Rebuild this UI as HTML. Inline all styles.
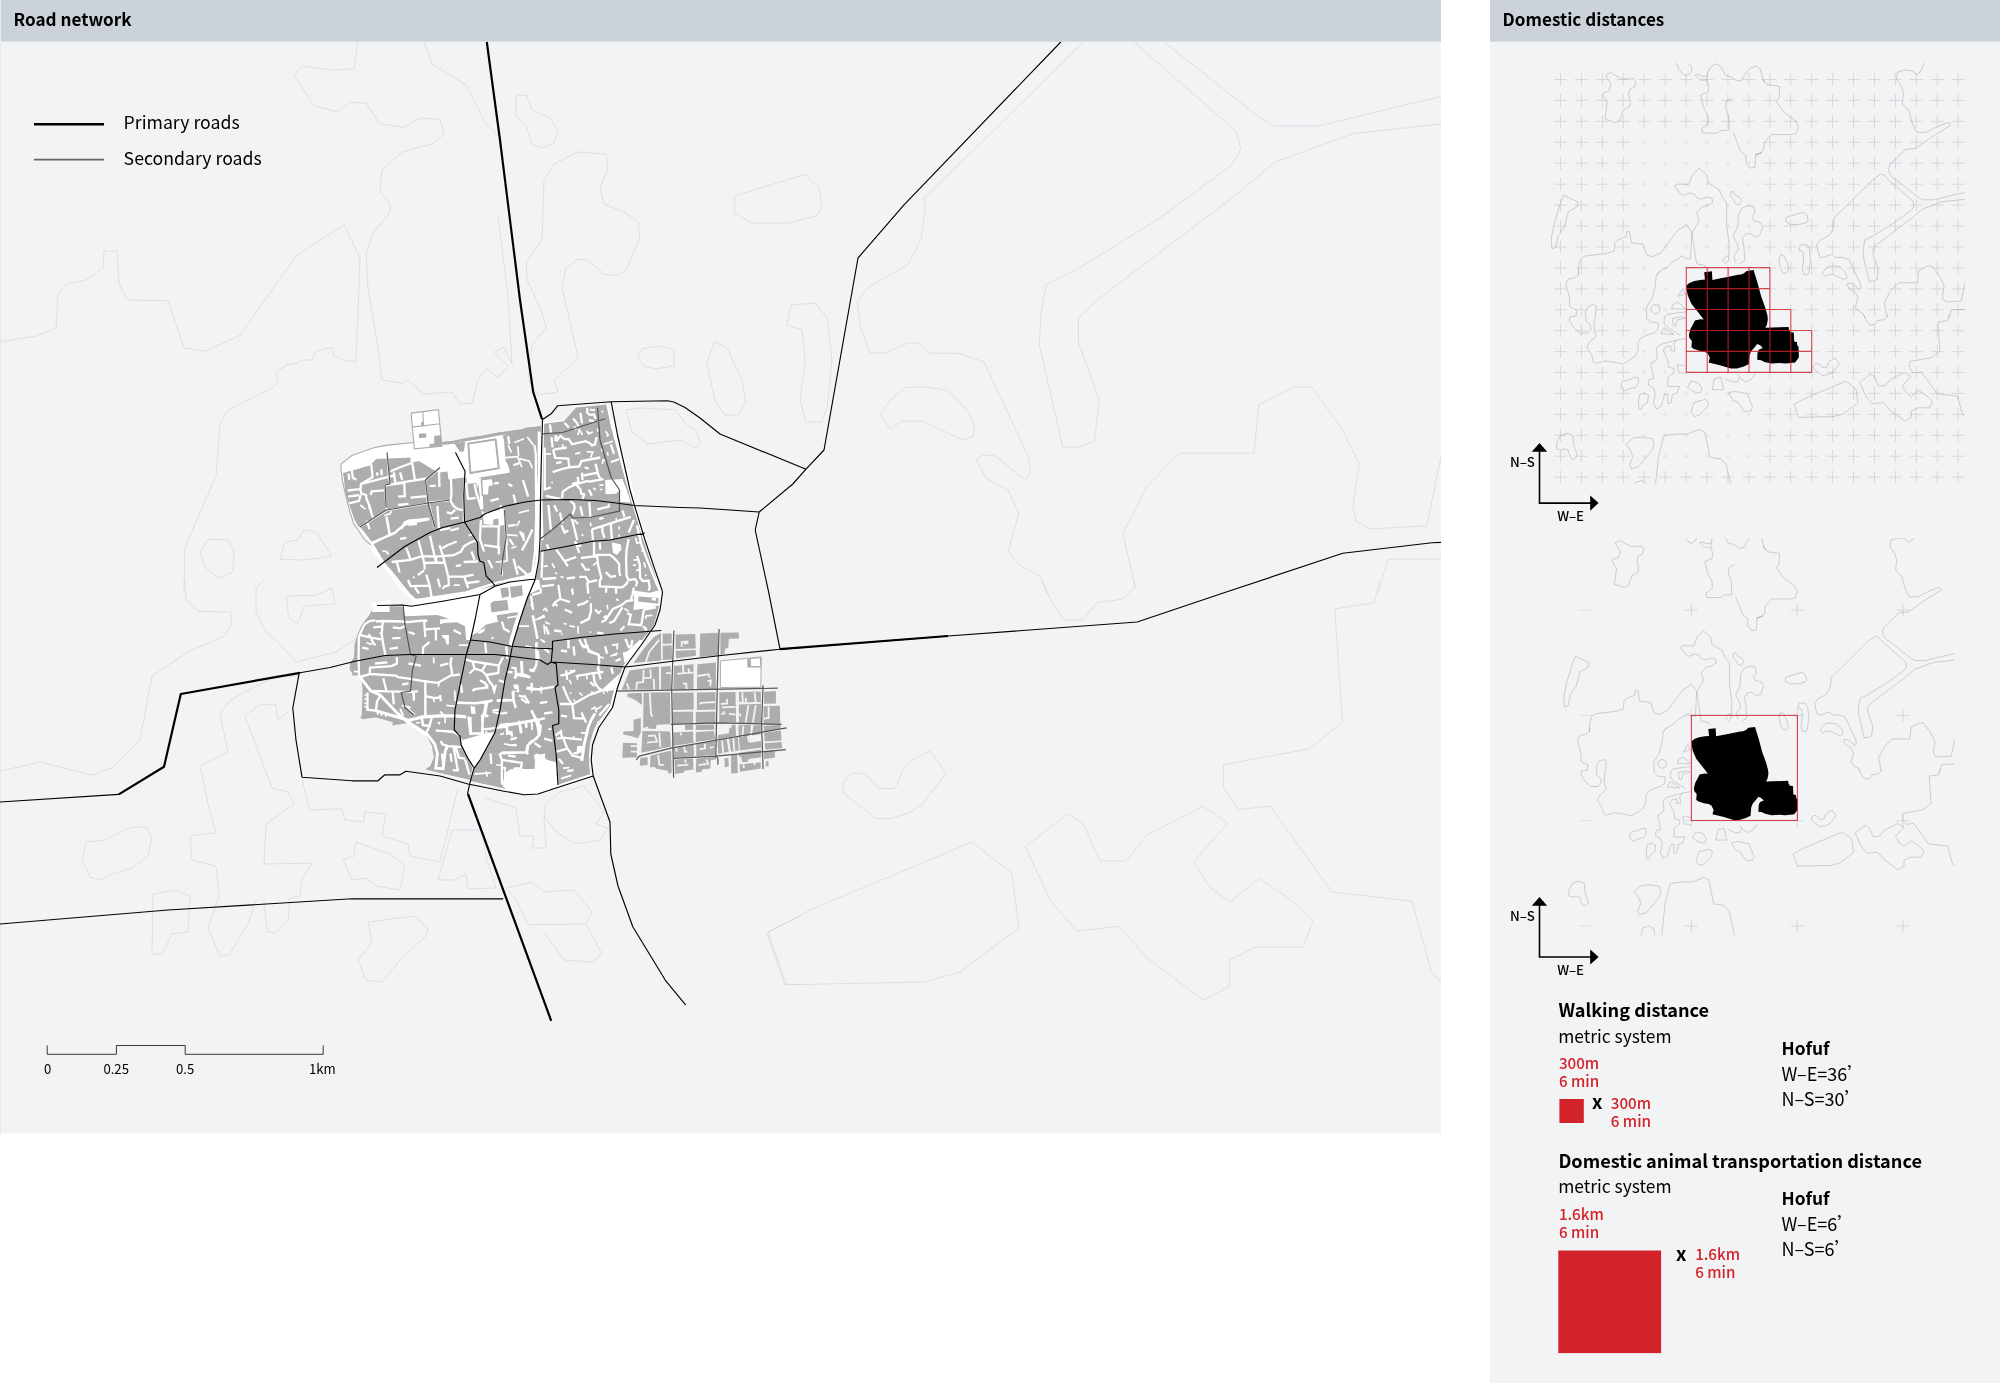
<!DOCTYPE html>
<html lang="en"><head><meta charset="utf-8"><title>Road network – Domestic distances</title>
<style>html,body{margin:0;padding:0;background:#fff}body{width:2000px;height:1383px;overflow:hidden;font-family:'Noto Sans CJK SC','Liberation Sans',sans-serif}
svg{position:absolute;left:0;top:0;display:block;will-change:transform}text{font-family:'Noto Sans CJK SC','Liberation Sans',sans-serif;fill:#000}
.pr{fill:none;stroke:#000;stroke-width:1.15;stroke-linejoin:round}.prt{fill:none;stroke:#000;stroke-width:2.2;stroke-linejoin:round}
.sr{fill:none;stroke:#555;stroke-width:1.2;stroke-linejoin:round}
.ct{fill:none;stroke:#cfd1d3;stroke-width:.6}
.ic{fill:none;stroke:#a9aaac;stroke-width:.55}
.g{fill:#adadad}.wh{fill:#fff}.bg{fill:#f2f3f5}
.s1{fill:none;stroke:#fff;stroke-width:1.7}.s15{fill:none;stroke:#fff;stroke-width:2.3}.s2{fill:none;stroke:#fff;stroke-width:2.9}.s25{fill:none;stroke:#fff;stroke-width:3.2}.s3{fill:none;stroke:#fff;stroke-width:3.6}
.wl{fill:none;stroke:#adadad;stroke-width:1.1}
.b1{fill:none;stroke:#f2f3f5;stroke-width:1}.b15{fill:none;stroke:#f2f3f5;stroke-width:1.8}.b2{fill:none;stroke:#f2f3f5;stroke-width:1.8}
.rl{fill:none;stroke:#d2232a;stroke-width:1.1}.rf{fill:#d2232a}
.pl{fill:none;stroke:#d4d5d7;stroke-width:.9}.pl2{fill:none;stroke:#e0e1e3;stroke-width:.9}
.hb{font-weight:700;font-size:17.1px}.lg{font-size:17.7px}.sc{font-size:13.2px}
.h1{font-weight:700;font-size:18.15px}.lt{font-weight:400;font-size:17.4px}.rd{font-weight:500;font-size:15.2px;fill:#d2232a}
.hf{font-weight:700;font-size:17.4px}.rg{font-size:18px}.ax{font-weight:500;font-size:13.3px}.x{font-weight:700;font-size:18.5px}
</style></head><body>
<svg width="2000" height="1383" viewBox="0 0 2000 1383">
<rect x="0" y="0" width="1441" height="1133.5" class="bg"/>
<rect x="1490" y="0" width="510" height="1383" class="bg"/>
<rect x="0" y="0" width="1441" height="41.6" fill="#cbd2d9"/>
<rect x="1490" y="0" width="510" height="41.6" fill="#cbd2d9"/>
<rect x="0" y="0" width="1" height="1133.5" fill="#e6e8ea"/>
<text x="13.6" y="25.6" class="hb">Road network</text>
<text x="1502.6" y="25.6" class="hb">Domestic distances</text>
<defs><clipPath id="cm"><rect x="0" y="41.5" width="1441" height="1092"/></clipPath>
<clipPath id="c1"><rect x="1551" y="63" width="421" height="420.5"/></clipPath>
<clipPath id="c2"><rect x="1562.7" y="538.2" width="397.3" height="397"/></clipPath>
<g id="mc24"><path d="M1083.2 42 1002.4 122 924 198 925.2 208 921.2 238.8 908 264.8 868 287.2 857.2 302.8 860.8 328 870 352.8 884.8 352.8 908.8 342.8 919.2 343.2 930 353.2 958 353.2 984 362 1028 456 1030.4 472 1027.2 478.4 1021.2 477.6 996 456 983.2 455.2 976 459.2 986.4 478.8 1008 490 1018.8 513.2 1008.4 550.8 1019.2 564.8 1040 576 1047.2 592.8M1134 42 1236 131.2 1240.8 148.8 1232 164.8 1160 218 1074 271.2 1046.4 284 1041.2 312 1039.2 344 1062.8 447.2 1079.2 447.2 1094.4 440.8 1099.2 400 1078.4 342 1078.4 318 1098 299.2 1232 198 1274.4 162.4 1352.8 133.6 1441.2 124M1164 42 1256 114.8 1274.4 126 1318 126 1441.2 96.4M1135.2 588 1122.8 532.8 1146.8 486.8 1179.2 453.2 1254 453.2 1258.8 404.8 1294 387.2 1312 387.2 1342.4 430 1359.2 464 1352.8 506 1356 521.2 1370.4 528.8 1426.8 526 1441.2 456M734.8 196 804.8 174.4 819.2 188 822 208 816 216 788 223.2 752 223.2 734.8 213.2 734.8 196M791.2 304.8 815.2 303.2 827.2 318 832 360 827.2 408 821.2 422 806 422 800 400 805.2 362 802 330 786.8 325.2 791.2 304.8M714 342 726.8 347.2 742 380 746 402 738 415.2 724.8 415.2 715.2 401.2 706.8 364 714 342M880 415.2 890 400 906 387.2 928 387.2 948 390.4 968.8 412 974.8 427.2 972.8 436 963.2 440 922 421.2 902 421.2 890.4 429.2 880 415.2M1388 559.2 1441.2 559.2M1378 592.8 1388 559.2M766.8 933.2 810 910 972 842 1012 873.2 1018.8 928 960 972 924 982 784.8 984.8 766.8 933.2M1025.2 846.8 1068 813.6 1084 824.8 1100 860.8 1126 860.8 1147.2 834.8 1203.2 806.4 1228 823.2 1194 861.2 1208.8 886.4 1230 902.4 1258.8 878.4 1291.2 900 1312.8 921.2 1303.2 947.2 1255.2 947.2 1229.6 960 1229.6 986.4 1203.2 1000 1147.2 958 1119.2 926.4 1076.8 931.2 1050.8 901.2 1025.2 846.8M843.2 783.2 851.2 773.2 862 773.2 870 778 878 788 894 788.8 898.8 781.2 902 771.2 910 760.8 930.4 751.2 946 773.2 922 804.8 908 813.2 891.2 818.4 876 818.4 843.2 792.8 843.2 783.2M1380 580 1374 602.8 1334.8 608.8 1342.4 722 1309.2 748.8 1223.6 764.8 1223.6 788 1238.8 809.6 1270 806 1332 892 1412 901.2 1432 974 1441.2 981.2M1041.2 580 1052 602 1064 620 1082.8 620 1096.8 602.8 1122 599.2 1135.2 587.2 1134 580"/></g>
<g id="ins"><path class="ic" d="M1605.6 75.5 1610.3 72.7 1622 79 1633.6 78.7 1636 81.8 1634.4 87.2 1630.2 88.8 1628.6 94.2 1630.5 100.7 1629.7 106.6 1623.5 109.8 1619.6 120.6 1615.7 122.5 1604.9 119.1 1607.2 102 1602.5 95 1603.3 92.6 1608.7 91.1 1611.1 84.1 1605.6 75.5M1676.4 62.8 1678.7 69.3 1682.6 74 1686.5 75.9 1691.1 72.4 1691.9 67 1687.3 63.1M1695 75.1 1700.5 80.2 1706.7 80.2 1708.2 70.9 1712.1 65.4 1716.8 63.9 1720.7 66.2 1725.3 75.5 1731.6 77.1 1737 81 1741.7 80.2 1745.6 73.2 1750.2 67.8 1756.4 66.2 1760.3 69.3 1762.7 78.7 1765 82.5 1762 78.7 1767.4 84.9 1775.2 85.7 1779.6 86.7 1779.1 97.3 1776.5 101.7 1784.5 112.9 1795.4 120.6 1798.5 126.9 1796.2 133.4 1792.3 134.6 1771.3 134.6 1764.3 142.4 1763.6 150.2 1759.7 153.3 1755 154.8 1761.9 152.5 1755.7 155.6 1754.9 167.3 1750.2 168.1 1746.3 163.4 1745.6 154.8 1740.9 151.7 1733.1 132.3M1695 75.1 1698.1 74.3 1702.8 76.3 1706.7 75.5M1706.7 80.2 1709 86.4 1708.2 91.9 1700.5 95 1702 101.2 1703.6 107.4 1708.2 116 1708.2 123.7 1701.7 128.4 1702.8 133.1 1717.6 133.1 1720.7 130.7 1729.2 130 1728.5 116 1725.3 106.6 1726.1 101.2 1732.3 98.1M1674.5 185.9 1677.2 184.1 1688.8 184.4 1691.9 175.8 1698.9 168.1 1706.7 175 1708.2 182.8 1719.1 189.4 1722.2 196.8 1726.6 203 1726.6 224.8 1729.2 243.5 1728.5 260.6 1725.3 263.7 1722.2 260.6 1726.9 255.6 1728.5 257.5M1674.5 185.9 1680.3 193.7 1683.4 195.3 1689.6 192.9 1694.3 194 1696.6 197.6 1700.5 199.1 1707.5 197.1 1712.1 198.4 1712.6 202.3 1708.2 205.4 1702 206.9 1696.6 213.1 1698.9 218.6 1698.1 223.2 1691.9 232.6 1686.5 224.8 1677.2 231 1660.8 252.8 1652.3 256.7 1646.8 255.1 1642.9 244.2 1631.3 242.7 1629.7 231.8 1626.6 231.8 1626.6 236.5 1618.1 239.6 1615 242.7 1614.2 251.2 1605.6 253.6 1585.4 255.9 1580.8 259 1578.9 265.2 1578.4 275M1691.9 232.6 1690.4 259 1685.7 258.2 1683.4 255.9 1680.3 256.7 1678.7 259 1674 260.6 1667.8 266.8 1660.8 270.7 1656.2 275M1691.9 232.6 1696.6 263.7 1703.6 265.2 1706.7 267.6M1563.7 195.3 1578.4 202.3 1576.9 206.9 1568.3 211.6 1564.4 227.1 1558.2 235.7 1555.9 247.3 1552 248.9 1551.2 238.8 1554.3 223.2 1560.5 203 1563.7 195.3M1730.8 192.2 1733.1 191.4 1735.5 195.3 1740.1 197.6 1741.7 200.7 1738.6 205.4 1734.7 203 1733.9 199.9 1730.8 196.8 1730.8 192.2M1735.5 262.1 1733.9 255.9 1738.6 248.9 1737 243.5 1733.1 235.7 1737.8 227.1 1738.6 213.9 1742.5 207.7 1748.7 205.4 1754.1 206.9 1754.9 213.1 1751.8 217 1754.1 220.9 1760.3 222.5 1762.7 227.1 1759.6 235.7 1754.9 237.2 1750.2 233.4 1745.6 234.1 1742.5 238.8 1744 248.1 1744.8 260.6 1740.1 263.7M1924.5 63.1 1919.8 72.4 1916.7 74.8 1912 70.9 1904.3 70.1 1897.3 72.4 1896.5 79.4 1901.1 85.7 1903.5 92.6 1902.4 104.3 1908.9 110.5 1912 122.2 1916.7 132.3 1926 132.3 1938.5 126.1 1948.6 122.2 1950.6 125.3 1935.3 134.6 1915.9 148.3 1905.8 149.4 1890.3 164.2 1888.4 168.8 1890.3 175 1894.9 179.7M1874.1 178.5 1880.6 174.3 1884 175 1887.2 178.5M1578.4 270 1578.4 274.7 1574.5 277.8 1568.3 279.3 1566 283.2 1566.8 288.7 1569.6 297.2 1569.6 306.5 1576.9 310.4 1576.1 315.9 1569.9 316.6 1569.6 321.3 1574.5 328.3 1580 333 1587.8 333 1590.9 329.1 1590.1 324.4 1586.2 321.3 1585.4 312 1588.5 306.5 1593.2 304.5 1596.3 306.1 1595.5 315.1 1594 324.4 1594.8 332.2 1596.3 336.1 1589.3 342.3 1587 347.7 1590.1 352.4 1592.4 357.1 1593.2 361.7 1596.3 363.3 1604.9 361 1611.9 361.7 1622.7 364.1 1629.7 360.2 1635.2 356.3 1638.3 349.3 1638 343.1 1640.6 338.4 1646.1 335.3 1653.8 333 1657.7 329.9 1658.5 322.9 1650.7 322.1 1646.8 318.2 1646.4 307.3 1652.3 298 1655.4 285.5 1656.2 276.2 1660 270.8M1650.7 308.1 1653.8 304.5 1658.5 305 1660 308.9 1658.5 312.8 1654.6 313.8 1651.5 311.2 1650.7 308.1M1685.7 312 1677.2 312.8 1667.8 314.3 1664.7 316.6 1663.9 322.9 1667.8 327.5 1674 331.4 1680.3 335.3M1672.5 318.2 1681.8 316.6 1684.9 318.2 1677.2 319.8 1675.6 326 1673.3 325.2 1672.5 318.2M1660.8 333.7 1663.9 327.5 1674 334.5 1660.8 333.7M1671.7 308.9 1672.5 305 1677.2 302.2 1681.8 305 1684.9 308.9 1671.7 308.9M1677.9 296.4 1682.6 288.7 1684.9 294.1 1677.9 296.4M1685.7 338.4 1674 340.7 1660 344.6 1656.2 347.7 1657.3 357.1 1655.4 361 1650.7 363.3 1652.3 371.1 1653.8 378.8 1648.9 379.6 1648.4 385 1653.8 388.2 1655.4 394.4 1653.4 402.2 1656.2 409.1 1660.8 406.8 1664.7 394.4 1667.8 394.4 1667.8 403.7 1670.9 402.9 1672.5 394.4 1677.2 392.8 1679.5 386.6 1667.8 386.3 1667.8 377.3 1674 372.6 1674 368.7 1668.6 367.2 1667.8 360.2 1663.2 350.8 1665.5 347 1670.9 346.2 1670.9 350.8 1674.8 350.8 1674 343.1 1677.2 340M1621.2 383.5 1622.7 381.2 1629.7 379.6 1635.2 377 1638.3 378.1 1638.3 383.5 1635.2 387.4 1629 388.9 1624.3 391 1621.5 388.2 1621.2 383.5M1639.1 409.1 1638.3 400.6 1639.8 394.4 1644.5 393.1 1648.4 395.2 1647.6 402.2 1642.9 405.3 1641.4 409.1 1639.1 409.1M1687.3 387.4 1691.1 381.2 1698.1 382.7 1702 388.2 1700.5 392.8 1694.3 392 1687.3 387.4M1691.1 411.5 1694.3 402.2 1705.1 399.4 1708.6 402.2 1707.5 406.8 1698.9 415.4 1694.3 416.5 1691.1 411.5M1728.5 392.8 1734.7 391.3 1747.1 393.6 1752.6 406.8 1751 411.2 1744 411.2 1737.8 402.2 1733.1 400.6 1728.5 392.8M1712.1 389.7 1714.5 378.8 1720.7 377.3 1723.8 389.7 1712.1 389.7M1556.7 448.8 1556.7 442.6 1560.5 435.6 1566.8 433.2 1573 435.6 1573.8 445.7 1577.6 455.8 1573 459.7 1569.9 456.6 1568.3 450.3 1564.4 448.8 1560.5 450.3 1556.7 448.8M1625.8 444.1 1633.6 437.9 1641.4 437.1 1652.3 438.7 1653.8 443.4 1652.3 450.3 1638.3 466.7 1631.3 468.7 1629.7 464.3 1632.8 456.6 1629.7 448.8 1625.8 444.1M1654.6 493.9 1655.4 485 1658.5 456.6 1663.9 435.6 1677.2 434 1688 434 1698.9 429.4 1704.4 431.7 1706.7 441 1709.8 457.3 1720.7 458.9 1726.1 464.3 1730.8 485 1732.3 493.9M1632.1 493.9 1635.2 482.2 1642.2 480.7 1646.8 483.8 1647.6 493.9M1685.7 365.6 1677.2 364.8 1678.7 372.6 1685.7 373.4M1737.8 374.2 1740.9 378.8 1745.6 381.9 1751.8 378.8 1755.7 372.6M1725.3 378.8 1733.1 381.9 1737.8 381.9 1739.3 377.3M1874.2 178.5 1853.7 198.8 1833.8 218.1 1834.2 220.6 1833.1 228.4 1829.8 235 1819.7 240.6 1816.9 244.6 1817.8 251 1820.2 257.3 1823.9 257.3 1830 254.7 1832.6 254.8 1835.4 257.4 1842.5 257.4 1849 259.6 1860.2 283.4 1860.8 287.5 1860 289.1 1858.5 288.9 1852.1 283.4 1848.8 283.2 1847 284.2 1849.7 289.2 1855.1 292 1857.9 297.9 1855.2 307.4 1858 311 1863.2 313.8 1865.1 318.1M1887 178.5 1912.9 201.1 1914.1 205.6 1911.9 209.6 1893.6 223.1 1871.8 236.6 1864.9 239.8 1863.5 246.9 1863 255 1869 281.2 1873.2 281.2 1877 279.6 1878.2 269.2 1873 254.5 1873 248.4 1877.9 243.7 1911.9 218.1 1922.6 209 1942.5 201.7 1964.9 199.3M1894.6 178.5 1917.9 197 1922.6 199.8 1933.6 199.8 1964.9 192.3M1887.3 316.8 1884.2 302.9 1890.3 291.2 1898.5 282.7 1917.4 282.7 1918.7 270.4 1927.6 266 1932.1 266 1939.8 276.8 1944.1 285.4 1942.5 296.1 1943.3 299.9 1946.9 301.8 1961.2 301.1 1964.9 283.4M1785.9 217.5 1803.7 212.1 1807.3 215.5 1808 220.6 1806.5 222.6 1799.4 224.4 1790.3 224.4 1785.9 221.9 1785.9 217.5M1800.2 245.1 1806.3 244.7 1809.3 248.4 1810.5 259.1 1809.3 271.2 1807.8 274.8 1804 274.8 1802.4 269.2 1803.8 259.6 1802.9 251.5 1799.1 250.3 1800.2 245.1M1780.7 254.5 1783.9 255.8 1787.7 264.2 1788.8 269.7 1786.7 273.1 1783.4 273.1 1781 269.5 1778.8 260.1 1780.7 254.5M1822.7 273.1 1825.2 269.2 1829.3 266 1834.9 266 1839.9 266.8 1845.2 272.3 1846.7 276.1 1846.2 278.3 1843.8 279.4 1833.3 274.6 1828.3 274.6 1825.3 276.6 1822.7 273.1M1951.4 309.5 1964.9 309.5M1948.8 318.1 1951.4 309.5M1794 404.3 1805 398.4 1846 381.2 1856.1 389.1 1857.9 403 1843 414.1 1833.8 416.6 1798.6 417.3 1794 404.3M1859.5 382.4 1870.3 374 1874.4 376.8 1878.4 385.9 1885 385.9 1890.4 379.4 1904.6 372.2 1910.9 376.4 1902.2 386 1906 392.4 1911.4 396.5 1918.7 390.4 1926.9 395.9 1932.3 401.2 1929.9 407.8 1917.7 407.8 1911.3 411.1 1911.3 417.8 1904.6 421.2 1890.4 410.6 1883.3 402.6 1872.6 403.8 1866 396.2 1859.5 382.4M1813.4 366.3 1815.4 363.8 1818.1 363.8 1820.2 365 1822.2 367.5 1826.3 367.7 1827.5 365.8 1828.3 363.2 1830.3 360.6 1835.5 358.2 1839.4 363.8 1833.3 371.8 1829.8 373.9 1825.5 375.2 1821.7 375.2 1813.4 368.7 1813.4 366.3M1949.4 314.8 1947.8 320.6 1937.9 322.1 1939.8 350.8 1931.4 357.6 1909.7 361.6 1909.7 367.5 1913.6 373 1921.5 372.1 1937.2 393.8 1957.5 396.2 1962.5 414.6 1964.9 416.4M1863.5 314.8 1866.3 320.4 1869.3 324.9 1874.1 324.9 1877.6 320.6 1884 319.7 1887.3 316.6 1887 314.8"/><path d="M1704.2 272.3 1711.9 271.3 1712.4 279.9 1720.7 278.3 1728.8 276.8 1738 274.8 1741 274.6 1744 273.3 1746.6 271 1753.6 270 1757.7 283.4 1761.2 296.6 1765.3 307.7 1767.5 315.8 1767.8 319.9 1766.8 324.9 1765.3 327.7 1788.6 327.1 1789.1 330 1790.6 332.2 1793.8 332.5 1794.2 341.6 1796.9 342.1 1797.3 345.7 1798.5 346.2 1798.9 357.3 1797.2 359.8 1795.1 362.4 1790.6 362.9 1785.5 363.6 1779.5 362.9 1771.4 363.6 1764.3 361.9 1761.2 360.3 1757.2 359.8 1757.5 352.8 1758.7 349.7 1762.8 348 1760.2 345.2 1757.2 343.9 1754.7 347.2 1751.1 351.2 1749.6 355.3 1748.9 363.9 1744 366.4 1736.9 368.4 1730.9 368.4 1720.7 365.4 1708.6 362.4 1709.8 357.8 1707.6 353.3 1704.5 351.7 1699.5 350.7 1693.4 348.7 1691.4 347.2 1691.9 341.1 1689.4 338.1 1688.9 335 1690.4 329 1692.4 325.4 1694.9 320.4 1700.5 319.3 1703.7 319.6 1698.5 312.8 1691.4 303.7 1687.8 295.6 1686.5 289 1686.3 285.4 1689.4 282.9 1694.4 280.9 1700.5 279.9 1705 279.6Z" fill="#000"/></g>
</defs>
<g clip-path="url(#cm)">
<path class="ct" d="M1083.2 42 1002.4 122 924 198 925.2 208 921.2 238.8 908 264.8 868 287.2 857.2 302.8 860.8 328 870 352.8 884.8 352.8 908.8 342.8 919.2 343.2 930 353.2 958 353.2 984 362 1028 456 1030.4 472 1027.2 478.4 1021.2 477.6 996 456 983.2 455.2 976 459.2 986.4 478.8 1008 490 1018.8 513.2 1008.4 550.8 1019.2 564.8 1040 576 1047.2 592.8M1134 42 1236 131.2 1240.8 148.8 1232 164.8 1160 218 1074 271.2 1046.4 284 1041.2 312 1039.2 344 1062.8 447.2 1079.2 447.2 1094.4 440.8 1099.2 400 1078.4 342 1078.4 318 1098 299.2 1232 198 1274.4 162.4 1352.8 133.6 1441.2 124M1164 42 1256 114.8 1274.4 126 1318 126 1441.2 96.4M1135.2 588 1122.8 532.8 1146.8 486.8 1179.2 453.2 1254 453.2 1258.8 404.8 1294 387.2 1312 387.2 1342.4 430 1359.2 464 1352.8 506 1356 521.2 1370.4 528.8 1426.8 526 1441.2 456M734.8 196 804.8 174.4 819.2 188 822 208 816 216 788 223.2 752 223.2 734.8 213.2 734.8 196M791.2 304.8 815.2 303.2 827.2 318 832 360 827.2 408 821.2 422 806 422 800 400 805.2 362 802 330 786.8 325.2 791.2 304.8M714 342 726.8 347.2 742 380 746 402 738 415.2 724.8 415.2 715.2 401.2 706.8 364 714 342M880 415.2 890 400 906 387.2 928 387.2 948 390.4 968.8 412 974.8 427.2 972.8 436 963.2 440 922 421.2 902 421.2 890.4 429.2 880 415.2M1388 559.2 1441.2 559.2M1378 592.8 1388 559.2M766.8 933.2 810 910 972 842 1012 873.2 1018.8 928 960 972 924 982 784.8 984.8 766.8 933.2M1025.2 846.8 1068 813.6 1084 824.8 1100 860.8 1126 860.8 1147.2 834.8 1203.2 806.4 1228 823.2 1194 861.2 1208.8 886.4 1230 902.4 1258.8 878.4 1291.2 900 1312.8 921.2 1303.2 947.2 1255.2 947.2 1229.6 960 1229.6 986.4 1203.2 1000 1147.2 958 1119.2 926.4 1076.8 931.2 1050.8 901.2 1025.2 846.8M843.2 783.2 851.2 773.2 862 773.2 870 778 878 788 894 788.8 898.8 781.2 902 771.2 910 760.8 930.4 751.2 946 773.2 922 804.8 908 813.2 891.2 818.4 876 818.4 843.2 792.8 843.2 783.2M1380 580 1374 602.8 1334.8 608.8 1342.4 722 1309.2 748.8 1223.6 764.8 1223.6 788 1238.8 809.6 1270 806 1332 892 1412 901.2 1432 974 1441.2 981.2M1041.2 580 1052 602 1064 620 1082.8 620 1096.8 602.8 1122 599.2 1135.2 587.2 1134 580M0 342 36 336 56 328 58 294 66 284 86 280 103.2 268 104 251.2 116.8 251.2 119.2 284 127.2 300 168 300.8 184 348 206 351.2 240 335.2 296 256 344 224.8 360 258 356 362 344.8 360 334 356 332 347.2 316 351.2 312 360 300.8 360 298 363.2 287.2 364.8 276 372 278 382 272 388 228 410 220 424 216 476 184.8 548 184 592.8M358 42 354 68.8 334 70 302 66 294 75.2 314 106 338 112 350 102 366 103.2 380 124 404 127.2 420 118 440 119.2 444 134 432 144 402 152 382 170 380 192 390 203.2 390 212 374 232 366 252 368 288 378 348 382 380 402 383.2 408 380 424 394 452 392 460 404 472 403.2 478 380 486 368 498 378 508 366 494 352 504 347.2 512 364 508 296 498 216M424 42 432 64 466 84.8 486 124 498 136M516 96 526 95.2 532 110 550 118 558 131.2 554 143.2 542 148 532 144.8 526 126 516 116 516 96M538 395.2 558 392 554 380 576 360 578 356 562 288 566 268 578 259.2 588 260 604 274 616 276 626 270 640 238 638 222 624 212 604 204 600 188 608 168 606 154 578 152 554 164 544 180 542 240 526 262 527.2 280 542 312 546 328 532 344.8 528 380 538 395.2M638 358 642 348.8 660 346 674 350 674 366 656 368.8 644 366 638 358M200 552 208 539.2 228 540 234 550 232.8 572 218 578 206 568 200 552M280 559.2 284.8 542 298 540 304 530 316 532 332 556 320 558 304 560 280 559.2M626 410 640 408 676 410 686 424 696 430 700 442 696 448 680 440 648 444 632 432 626 410M0 771.2 40 762 92 775.2 112 768 140 740 152 676 188 652 224 636 232 624 230 610M184.8 580 186 600 198 611.2 228 612M264 580 256 588 256 612 266 632 280 644 296 662 336 652 360 636M286 596 316 595.2 332 588 335.2 604 304 606 298 624 288.8 618 286 596M82 860 86 842 104 840 132 827.2 146 827.2 152 836 148 856 132 868 112 874 100 880 90 876.8 82 860M244.8 716 260 704 276 704.8 278 720 288 712M244.8 716 272 788 288 792 294 804 266 824 264 864 312 863.2 302 878 300 896 290 898 288 920 276 932.8 267.2 932 264 900M298 676 276 676 230 700 220 714 228 752 200 766 208 804 216 832.8 190 836 192 860 216 866 219.2 896 208 928 220 956 228.8 955.2 248 924 256 900M152 954 152.8 894 176 890 190 896 188 932 172 934 162 954 152 954M302 780 310 810 342 808.8 344.8 820 364 822 364.8 812 386 814 382 836 408 844 410 856 440 862 458 788M343.2 860 354 856 356 842 390 854 404.8 866 400 890 376 886 366 878 352 880 343.2 860M358 960 372 942 368 922 414 916 428 928 426 936 400 960 382 982 366 980 358 960M438 880 444 860 452 830 482 830 486 856 496 888 468 888.8 466 874 454 880 438 880M484 798 516 808 520 836 534 836 532 848 546 848 544 816 546 804 560 792 584 786 604 812 596 824 608 828 600 840 576 844 556 832 544 816M506 888 532 882 544 892 574 890 592 912 586 924 528 924.8 516 900 506 888M544 932 564 960 592 962 602 954 586 924M768 932 799.6 916M768 932 786 984 799.6 984.8"/>
<path class="wh" d="M341.5 464 346.6 457.9 372.9 447.8 413.4 443.2 411.3 413.4 438.7 410 441.1 444.4 466 439.1 499.4 433.6 522.7 428.6 540.9 426.2 542.9 421.5 551 422.1 563.2 419.5 575.3 413.4 577.3 406.3 607.7 403.9 613.4 430.6 623.9 469.1 633 501.5 644.1 533.8 653.2 562.2 662.3 591.5 662.5 592.5 660 610 655 625 641.2 645 625 667.5 617.5 687.5 611.2 710 598.8 727.5 592.5 745 591.2 760 593.8 775 555 787.5 537.5 794.5 525 795 505 790 470 781.2 425 770 428.8 767.5 433.8 757.5 432.5 746.2 426.2 735 416.2 726.2 406.5 723.2 392.2 725.5 392.8 722.2 376 717.5 362.5 719.2 360.2 717.5 361.8 715 362 708.8 362.5 690.8 361.8 681.2 359.2 675.5 352.2 675.5 352.2 673 349.8 669.8 349.8 663.5 354 657.2 354.5 644.5 357.5 634 361.8 624.8 369.8 614.2 372.8 602.5 391.2 600 392.5 605 412.5 606.2 413.4 601.1 405.3 594.6 395.1 582.4 385 569.3 374.9 554.1 362.8 537.9 353 521.7 344.9 495.4 342.5 477.2Z"/>
<path class="g" d="M343 473 370 465.5 376.2 459 410.5 457.5 410.5 463 419 461 434.5 470.5 440 472.5 447.5 471.5 448.5 479.5 460 478 466.2 477 467 483.8 476.2 483 477.5 488 479.5 477.5 495.5 475 510 472.5 508 465 505.5 460.5 504 440 502.5 435.8 525 428 540.5 426.5 539.5 452.5 536 500 536.5 540 535 565 529.2 575.5 490 587 450 595.5 430 598 414.5 598.8 407 593 397 581 386.8 567.8 376.8 552.5 364.5 536.5 354.5 520 345.5 493.8 344 480Z"/>
<path class="g" d="M544.2 423.8 563.8 421.2 576.2 407.5 606.2 404.5 611.2 427.5 621.2 465 632.5 505 642.5 537.5 655 575 659.5 590 658.8 607.5 653.8 625 647.5 633.8 638.8 643.8 623.8 665 615 686.2 610 706.2 596.2 725 591.2 740 590 760 591.2 773.8 558.8 784.5 557 762.5 547.5 760 540 754.5 537.5 768.8 510 770 505 772.5 505 788.8 470.5 781 473.8 769.5 480 760 495 732.5 500 710 505 680 510 656.2 512.5 645 520 620 527.5 597.5 535.5 580 539.5 560 541.2 540 542 500 543 465Z"/>
<path class="g" d="M373.8 605.5 402.5 606.5 405 616.2 437.5 615 452.5 620 465 626.2 466.2 640 470 640 466.2 655 460 685 455 710 454.2 730 460 736.2 461.2 745 467.5 757.5 472.5 767.5 470 780 425 769.5 430 766.2 433.8 757.5 432 746.2 426.2 735 416.2 726.2 406.5 723.2 392.2 725.5 392.8 722.2 376 717.5 362.5 719.2 360.2 717.5 361.8 715 362 708.8 362.5 690.8 361.8 681.2 359.2 675.5 352.2 675.5 352.2 673 349.8 669.8 349.8 663.5 354 657.2 354.5 644.5 357.5 634 361.8 624.8 369.8 614.2Z"/>
<path class="g" d="M470.5 640 490 642 511.2 646.2 509.5 661.2 505 680 500 710 495 732.5 490 732.5 480 735 462.5 740 460 736.2 454.2 730 455 710 460 685 466.2 654.5Z"/>
<path class="g" d="M419 433.6 426.3 433.4 426.3 437.8 419 438Z"/>
<path class="g" d="M434.2 435.7 441 435.2 441.9 446.2 429.5 447.2 429.5 444.1 434.2 443.6Z"/>
<path class="g" d="M421.1 422 423.7 421.8 423.7 425.7 421.1 426Z"/>
<path class="g" d="M454.2 443.3 465.2 441.8 463.9 451.4 459.9 451.7Z"/>
<path class="g" d="M521.9 429.9 527.1 427.5 540.8 426.2 540.8 435.2 535 445.1 527.1 436.2Z"/>
<path class="g" d="M500.4 587.9 508.2 587.4 509.3 596.3 501.9 597.9Z"/>
<path class="g" d="M509.8 586.9 521.9 585.3 522.9 595.2 511.4 597.9Z"/>
<path class="g" d="M490.4 603.6 493.5 601.3 507.2 600 508.5 609.9 491.4 612.6Z"/>
<path class="g" d="M496.7 615.2 513.5 612.6 518.2 612.6 514 624.6 509.8 639.3 507.2 654 468.3 653.5 470.4 639.3 472.5 635.1 477.8 632 486.2 624.6 498.8 621.5 497.2 619.4Z"/>
<path class="wh" d="M470.4 444.1 494.6 440.4 497.5 467.2 489.3 468.8 488.8 463 484.1 463.5 484.6 469.8 478.8 470.9 478.3 465.1 471.5 466.1ZM481.5 479.8 492.5 478.2 493.8 486.1 489.3 486.6 488.8 495 482.5 495.5ZM483 512.9 492.5 511.3 503 508.7 505.1 524.9 498.8 526 498.3 518.6 493.5 519.2 493 524.9 483.6 523.9ZM498.8 434.6 501.9 436.2 504.6 458.8 505.1 473.5 501.9 474ZM605.1 480 622.4 479 626.6 489.5 630.8 502.6 619.8 502.1 619.2 491.1 616.1 493.7 605.6 494.2ZM611.9 542.5 619.2 543.9 620.1 550.7 617.1 554.9 612.9 552.8ZM633.4 590.6 649.7 592.7 660.2 590.1 662.1 594.8 659.7 605.3 645.5 608.4 633.4 610 634.2 600ZM530 578 534.2 579 539.4 580.1 540.5 588.5 532.1 592.7 530 593.2ZM403.8 606.8 412.7 606.6 482 594.7 470.4 633 466.2 632 465.7 624.6 461 622 444.2 623.1 440 624.6 440 619.4 453.1 618.3 445.2 615.2 429.5 612.6 421.1 612 404.8 614.7ZM373.8 603.9 389.6 603.9 389.6 612 371.7 612ZM442.1 635.1 448.9 635.1 448.9 644.6 446.3 644.6 445.2 639.3 442.1 637.2ZM476.7 633.6 479.9 630.4 485.1 628 484.1 631.5 480.4 633.6ZM509.4 785.2 510.5 770.2 521 768.6 534.6 770.7 535.2 763.9 534.1 755 536.7 753.6 540.9 754.7 545.1 761 549.3 763.1 555.1 762.6 557.2 785.2ZM602.4 689.3 619.7 673.6 616.5 684.1 613.4 690.4ZM624.4 663.1 644.9 640 639.6 640 627 651.5 622.8 652.6ZM577.2 746 582.9 746 582.9 752.3 578.2 752.9ZM462.6 743 472.5 741.9 473.1 739.8 480.9 739.3 482 743 489.3 743 474.6 768.2 471.5 764 465.2 753.5ZM504 780.8 509.3 779.7 509.8 769.2 534.5 769.2 535.5 755.6 545 753.5 545 791.3 534.5 793.9 522.9 793.9 503 787.1ZM474.6 772.9 491.4 771.9 491.4 773.4 474.1 775Z"/>
<path class="g" d="M638.7 596.4 658.6 597.9 658.1 603.7 638.1 601.6Z"/>
<path class="s1" d="M387.5 457.7 388.5 475.1 390.1 484M384.9 485.6 386.4 510.2M425.8 479.8 427.4 502.4 429.5 505 434.7 528.1M427.4 502.4 450 500.3M387.5 510.2 427.4 503.4M360.2 527 387 510.2M465.2 472.4 463.6 493.4 463.6 521.8M440 467.2 433.7 473.5 425.8 479.8M384.3 515.5 389.6 513.9 391.7 511.3M514.5 442.5 524 438.8M508.2 445.1 511.4 452.5M517.7 446.2 518.7 455.6M505.1 457.7 517.7 456.7 521.9 467.2M519.8 458.8 529.2 460.9 532.4 468.2M527.1 436.7 533.4 445.1M504 509.2 507.2 545M518.7 512.9 529.2 510.2M519.8 520.7 516.6 526M482 511.3 484.1 515.5M500.9 505 499.8 514.4M360.2 505 365.4 509.2M368.6 505 369.6 509.2M453.6 585.1 459.9 585.1M382.2 551 386.4 551.5 388.5 554.6M507.2 534.7 517.7 535.7M511.4 548.3 516.6 546.2M495.6 562 503 561.5M505.1 520 507.2 560.9 501.9 562 501.9 574.6M443.1 587.2 443.1 589.3M412.7 577.2 414.8 577.7M468.3 535.7 472.5 534.7M577.8 434.9 579.3 429.6 582.5 434.9M586.7 430.7 588.8 433.8 593 431.7M589.8 409.7 595.1 410.2M562.5 444.3 563.1 447.5M575.1 453.8 580.4 452.7M586.7 451.7 593 452.2 590.4 457.5M593 487.9 596.1 490M599.3 485.3 603.5 484.8M599.8 489.5 602.4 489.5M603.5 444.3 612.9 441.2M602.4 463.8 603 460.1 605.6 460.6M605.6 431.2 608.2 434.9 606.6 436.5M608.2 503.7 609.3 506.3M574.1 519.9 578.3 524.1M616.1 517.8 616.6 521M590.4 522.6 590.9 526.2M619.2 526.2 619.2 529.4M619.2 534.6 619.2 536.7M637.1 526.2 640.2 540M581.4 534.6 583.5 535.7M601.4 411.8 603.5 411.3M597.2 428.6 598.2 431.7M551.5 482.1 552.6 483.2M601.4 448.5 602.4 451.7M607.2 452.2 608.2 455.4M543.6 453.8 551 453.8M593 565.4 597.2 562.2M560.4 576.4 563.6 577.5M607.2 604.8 607.7 609.5M598.8 612.6 601.4 610.5M624.5 608.4 628.7 611.6M645.5 615.8 652.3 615.3M645.5 615.8 646 618.9M543.1 610.5 545.7 608.4 547.3 611.6M542.6 614.7 544.2 617.9M545.2 622.1 549.9 624.2M563.6 623.7 566.7 624M569.4 625.8 575.1 626.8M577.8 626.3 578.3 633.6M633.4 560.1 639.2 559.6M632.9 565.4 636 564.9M636 570.6 639.2 569.6M643.9 562.2 645.5 567.5M645 575.9 646.5 574.8M635.5 537.6 637.1 543.3 640.2 542.3M552 563.3 554.7 568M555.2 572.7 557.3 573.8M543.6 566.4 547.8 565.9M534.2 620 540.5 618.4M611.9 645.2 617.1 644.7 617.1 649.4M610.8 655.7 617.1 654.6M540.5 639.4 544.7 642M589.8 631.5 590.9 632.6M561.5 633.6 562.5 634.7M589.8 597.9 590.4 596.9M616.1 599 618.7 600.6M641.3 550.7 643.9 551.2M645.5 627.3 646.5 630M366.5 642.5 371.7 644.6M379.6 633 381.2 633.3M353.9 671.4 359.1 671.9M433.7 657.2 433.7 662.4 434.7 663M433.7 698.1 434.2 701.3M438.9 682.9 438.4 686.6M364.4 695 366.5 695M364.4 699.2 366.5 699.2M364.4 703.4 366.5 703.4M364.4 706.5 366.5 707.1M377 710.7 378 714.9M381.2 712.3 381.7 716M385.4 713.4 385.9 717M400.1 708.6 403.2 714.9M446.3 705.5 453.6 706M440 711.3 443.1 713.9M422.1 719.1 423.2 725.4 429.5 725.4 431.6 719.1M445.2 717 445.2 723.3M437.9 722.3 440 723.3M435.8 730.7 454.7 731.7M494.6 690.8 496.2 684.5M486.2 716.5 481.5 717M454.7 691.3 455.2 700.2M513.5 685 517.7 685.5 518.2 690.8M501.9 713.9 507.2 712.8M519.8 723.3 520.8 729.6M526.1 722.3 526.6 727.5M531.3 721.2 532.4 726.5M538.7 719.7 539.7 735M507.2 617.8 517.7 616.2M491.4 638.8 493.5 637.2M458.9 645.1 468.3 645.1M518.7 626.2 529.2 626.2M543.9 624.6 545 634.1M536.7 642.1 537.3 646.3M514.2 688.3 517.8 687.8 518.4 691.4 515.7 691.4M531.5 683 531.5 692.5M540.9 687.8 541.5 693.5M500 713.5 507.3 712.4M525.2 722.9 526.2 728.2M531.5 721.9 532 730.3M500 734.5 504.2 733.4M537.8 726.1 542 726.1M548.3 729.2 551.4 729.2M504.2 743.9 510.5 745 516.8 744.5M502.1 768.1 505.2 767.6 504.7 779.6 502.1 785.2M569.8 670.4 573.5 671.5M577.2 676.2 577.7 679.9M586.6 674.6 587.1 679.4M569.3 679.9 571.4 684.1M569.8 693 571.4 693.5M579.3 692.5 582.4 695.6M591.3 691.4 592.9 693M573.5 699.8 575.1 700.9M603.4 691.4 603.9 694.1M607.1 690.9 607.6 692.5M591.3 709.3 595 707.2 596.6 712.4M596.6 709.3 601.8 706.1M580.8 732.9 586.1 732.9M573.5 736.1 574 739.7M563 768.1 569.3 767.6M560.9 778.6 571.4 775.4M598.7 656.8 603.9 657.8M610.2 656.3 617.6 653.1M612.3 645.2 618.6 644.2M542 641 545.1 642.1M415.8 723 420 722.5M437.9 722 440 724.1M445.2 716.7 445.2 722M519.8 722 521.9 732.5M526.1 722 527.1 727.2M531.3 720.9 532.4 727.2M508.2 745.1 516.6 745.6M496.2 765 501.9 765M501.9 713.6 507.2 713.1M486.2 771.3 487.2 776.6M454.7 690.5 455.2 701M446.3 705.7 454.7 706.2M426.3 696.3 434.7 697.8 440 697.3M433.7 698.4 434.2 702M440 711.5 443.1 714.6M413.2 692.1 413.7 701M400.1 709.4 403.2 715.7M407.4 708.3 414.8 714.6M492.5 686.3 494.6 693.6M513.5 686.3 517.7 686.8M527.1 687.3 531.3 688.4 531.9 683.1M531.3 688.4 540.8 689.4"/>
<path class="s15" d="M371.2 464 372.6 477.2 362.8 482.9 361 484.2 360.5 489.2M390.6 471.4 400.1 467.2 411.6 463M412.2 462.5 413.7 472.4 414.8 479.3M393.8 472.4 395.4 482.9M395.4 483.5 408.5 481.4 426.3 478.5M361.2 484 383.3 478.2 393.8 475.6M360.5 489.2 361.2 493.4 366 495 366.5 498.7 369.6 506 371.7 514.4 373.3 517.6M347.6 490.5 359.7 489.2M348.1 496.6 359.1 495M349.2 503.4 359.1 500.8 360.7 495M370.7 495 371.7 491.3 384.3 490.3M384.3 485.6 390.6 484.5 404.3 482.9 404.8 496.1 398 496.6M410.6 497.6 426.3 496.1M438.9 468.2 439.5 487.1M451 478.7 451.5 493.4 450.5 500.8 453.6 506 457.8 509.2 462.6 510.2M446.8 512.3 451.5 513.4 455.2 509.7M386.4 516.5 388 523.9 389.6 534.4M371.7 543.8 389.6 534.9 395.9 532.3 398 529.7 402.2 527.6 404.3 522.8 408.5 520.7 429.5 518.6M437.4 506 438.9 528.1M466.2 482.9 467.8 498.7 475.7 498.2M474.6 484 476.2 492.4 481.5 509.2M522.9 479.8 528.2 496.6M508.2 484 512.4 486.1M351.8 470.3 352.8 477.7 356.5 479.8M381.2 469.3 381.7 475.1M377 472.4 377.5 475.6M534.5 445.1 535.8 454.6 536.4 545M372.3 542.6 393.8 533.6 398 530 402.2 526.3 408.5 523.1 429.5 519M386.4 516.9 389.6 534.2M406.4 547.8 410.6 559.9M418.5 540.5 424.2 563 424.8 569.3M430 535.7 435.8 562M391.7 562 410.6 559.9 422.1 556.2 435.8 556.7 453.6 555.2 461 551.5 464.1 546.2 470.4 542.6 475.7 540.5M439.5 545.2 443.1 556.2 448.4 577.2 448.9 585.1 443.1 587.2M442.1 548.3 447.3 545.2 456.8 541.5M424.2 563 444.2 562.5M435.8 556.7 436.3 562M396.9 562 399.6 572.5M417.9 575.1 424.2 570.4M426.3 574.6 429.5 585.1 431.6 597.2M408 579.8 410.6 586.1 429.5 585.6M448.9 576.7 464.1 576.7 473.6 574.6M464.1 576.7 468.3 588.2M463.6 562 477.8 561.5M467.3 583 479.4 581.4M480.9 520 479.9 538.9 484.1 551.5M482 526.3 498.8 526.3 498.3 546.2M532.4 529.4 527.1 541 521.9 550.4M484.1 545.2 498.8 547.3 498.8 554.6M501.9 559.9 501.9 575.6M513.5 558.8 517.7 574.6M517.7 566.2 527.1 574.6M359.1 527.3 372.8 545.2 384.3 564.1 391.7 572.5 400.1 583 408.5 593.5 415.8 600.3 431.6 597.7 466.2 592.4 495.6 583 524 576.7 532.4 572.5 535 551.5 536.1 520M553.1 449.6 555.2 458 568.3 458.5 569.4 467.4 563.6 468.5 552.6 472.2M569.4 467.4 579.3 466.4 581.4 461.1 600.3 457.5M555.2 441.2 555.7 435.4 557.3 440.1 560.4 435.9 564.6 439.1 568.8 439.1 572 444.3 585.6 441.2 589.8 443.3 591.9 445.4 595.1 444.3 596.7 437M587.2 408.1 587.2 412.8 589.8 414.9 594 414.4 595.6 419.1M580.4 412.8 582 423.3M573 418.6 577.2 423.3 578.3 426.5M564.6 422.8 568.8 427.5M553.6 449.6 566.7 447.5M595.6 463.8 598.2 474.8 600.3 478.5M581.4 475.8 598.2 472.7M582 472.7 582.5 480M577.8 476.9 578.3 482.1 572 484.2M562 498.4 562.8 491.6 568.8 487.4 576.2 484.2 586.7 481.1 589.8 481.6 603.5 479M576.2 484.2 580.4 489.5 581.4 493.7 584.1 494.7 582.5 498.9M544.7 447.5 544.7 489.5 551 487.4M610.8 462.2 619.2 459M570.4 501 574.1 504.2 574.6 508.4 572.5 514.7M589.3 502.1 590.4 516.8M548.4 505.2 551 530.4M559.9 512.6 562.5 523.1M591.9 529.4 630.8 516.8M591.9 529.4 593 540M602.4 525.2 602.4 531.5 604.5 537.8M610.8 524.1 611.9 540M633.9 519.9 628.7 532.5M572 518.9 577.2 540M561.5 525.2 564.6 532.5 568.3 530.4M542.4 421.2 541.8 458 541.3 500 542.4 540M556.2 549.6 564.6 561.2 567.8 566.4M564.6 561.2 576.2 557M575.1 541.2 579.3 552.8M580.9 558 594 556.5 597.2 554.9 609.8 554.9 612.9 557 617.1 561.2 619.2 564.3 619.2 571.7M594 542.3 594 556.5 597.2 556.5 598.2 565.4 601.4 578 599.8 580.6 599.8 586.4 622.4 587.4 627.1 583.2 627.1 581.1M599.8 542.3 600.3 549.6M628.7 539.1 626.6 549.6 626.1 559.1 626.6 575.9 628.7 580.1 635 579 637.1 582.2 636 586.4M581.4 563.3 585.6 569.6 589.8 569.6M605.6 572.2 610.8 576.9 616.1 575.9M542.6 579 556.2 578M566.7 578.5 575.1 577.5M579.3 576.9 585.6 576.9 588.8 582.2 597.2 580.1M541.5 586.4 554.1 584.8M558.3 584.8 560.4 599 555.2 602.1 552.6 606.3M560.4 599 569.9 602.1M587.2 582.2 588.3 593.7M606.1 587.4 606.1 592.7M616.1 588 616.1 593.7M577.2 605.3 584.6 603.2 588.3 600.6M590.9 603.2 590.9 611.6 588.8 618.9 580.4 623.1M601.4 622.1 605.6 620 612.9 609 621.3 605.3 626.6 601.1 633.4 600M609.3 623.1 614 621 622.4 607.4M633.9 587.4 632.4 594.8 630.8 600M627.1 613.2 630.8 614.7 628.7 624.2 641.3 625.2 643.9 609.5M531 595.8 533.1 609.5M533.1 615.8 537.3 638.9M637.1 555.9 639.7 564.3 640.2 578 642.9 581.1 648.6 580.6 649.7 587.4 648.6 590.6M637.1 525.5 641.3 544.4 647.6 561.2 656 582.2 659.7 590.6M568.8 640.5 568.3 648.3M579.3 639.4 582.5 646.2 588.8 646.2M584.6 638.9 588.8 651.5 598.2 654.6 599.3 660M625.5 638.9 628.7 647.3 631.3 646.2 632.4 639.9M359.1 677.1 358.6 657.2 358.9 636.2 364.4 624.6 369.6 621 375.4 620.4M375.9 621.5 382.2 621 402.2 621.5 408.5 622 425.3 620.4 427.4 621M382.8 621.5 381.7 634.1 383.3 644.6 385.4 655.1M360.2 635.1 368.6 637.2 381.2 639.3M368.6 634.1 370.7 637.2 372.8 642.5 375.4 645.1M373.3 627.3 381.2 626.7M392.7 627.3 400.1 628.3 404.8 626.2M392.2 638.3 400.6 637.8M362.3 647.7 368.6 648.8M424.2 621.5 425.3 637.2M425.8 629.4 440 628.3M435.8 628.8 436 640.4M422.7 655.1 423.2 647.2 429.5 642M359.1 677.1 370.7 674 395.9 675.6 398 677.1 408.5 678.7 425.3 681.3 437.9 682.9 450.5 675.6 459.9 674.5M369.6 672.9 370.2 667.7 391.7 666.1 396.9 663.5 396.9 657.2M451.5 657.2 450.5 663.5 452.1 674M383.3 678.2 386.4 690.8M425.3 681.3 425.3 716M425.3 696 433.7 698.1 440 697.6M370.7 690.8 386.4 691.3 410.6 691.8 417.9 691.3M413.7 691.8 414 699.7M367.5 692.4 367.5 709.7 375.9 710.7 377 701.3 380.1 696M392.7 692.4 393.8 704.4M465.2 659.3 472.5 661.4 486.2 663.5 498.8 665.6 503 657.2M472.5 661.4 474.6 668.7 469.4 673.5M474.6 668.7 482 670.8 486.2 663.5M482 670.8 486.2 675 489.3 681.3 493.5 686.6 494.6 690.8M486.2 675 498.3 672.9 498.8 665.6M479.9 680.3 485.1 682.9 487.2 687.6 474.6 689.2 472.5 691.3M455.7 702.9 475.7 703.4 487.2 702.3 492.5 700.2M487.2 702.3 485.1 713.9 482 716 483 735M470.4 717 471 735M511.4 667.7 515.6 668.2 516.1 678.2M521.9 661.4 522.4 674 530.3 677.1M516.1 674 522.4 674M529.2 669.8 532.4 670.8 536.6 665.6M513.5 690.8 513.5 700.2 515.6 707.6M496.7 700.8 513.5 700.2M527.1 687.6 531.3 688.7 531.9 682.9M531.3 688.7 540.8 689.7 541.3 686.6M531.3 710.7 536.6 721.2M508.2 725.4 519.8 723.3 536.6 720.2 545 718.1M482 729.6 507.2 726.5 507.2 735M501.9 621.5 504 628.8 509.8 632M485.1 642.5 486.2 653M536.1 642.5 536.6 663.5M532.4 615.2 537.6 638.3M531.3 603.6 533.4 609.9M538.7 618.3 545 616.2M521 661 522 673.6M514.7 678.8 515.7 674.6 530.4 677.3M529.4 669.4 533.6 671 536.7 663.6M537.8 650.5 538.8 661M513.6 690.4 513.1 699.8 515.7 707.2M504.2 699.8 513.1 700.4M526.2 688.3 531.5 689.3 542 688.8 554.6 686.7M531.5 710.3 535.7 719.8 537.8 727.1 538.8 734.5 536.7 738.7 530.4 741.8 527.3 746 526.2 752.3M500 725 518.9 722.9 535.7 719.8M518.9 720.8 521 733.4M506.3 722.9 507.3 731.3 511.5 732.4 512.1 736.6M500 753.4 526.2 752.3 528.3 754.4M560.4 675.7 567.2 674.1 573.5 671.5 575.1 669.9M566.1 670.4 567.2 679.9M575.6 676.2 593.4 673.1 598.7 672.5 603.4 672M593.4 673.1 594.5 682 598.7 688.3 602.4 690.4M599.2 668.3 598.7 672.5 600.8 679.4M611.3 667.3 612.9 674.1M563 686.2 568.2 698.8 572.4 704.6 574 718.2 582.9 718.5M581.4 712.4 586.1 722.4M572.4 704.6 590.3 694.6 602.4 690.4 611.3 689.3M559.8 704 571.4 704M555.6 735.5 560.9 731.3 561.9 737.6M556.7 738.7 563 737.6 581.9 739.7M563 737.6 567.2 748.1 572.4 755.5 580.8 757.6 581.9 760.7M555.6 751.8 567.2 748.7M573.5 753.4 577.7 752.9 578.2 747.1 580.8 746.6M581.9 644.2 584 647.3 587.1 646.3 589.2 650.5 598.7 654.7 599.2 663.1 597.6 670.4M568.2 640 568.8 648.4M599.2 715.6 609.2 704M441 740.9 442.1 744 447.9 746.1 455.7 746.7 461 747.2M435.8 730.4 453.6 732 459.9 735.6M455.7 747.2 458.9 757.7 465.2 758.7M453.6 747.2 457.8 770.3 452.6 770.3M465.2 759.8 469.4 774.5M431.6 717.8 429.5 726.2 426.3 732.5M422.1 718.8 422.7 725.1 429.5 726.2M468.3 716.7 470.4 733.5 482 733.5 483 713.6M483 713.6 482 743M486.2 731.4 487.2 743 481.5 743.5M486.2 701 484.1 713.6 488.3 716.7M456.8 702.6 475.7 703.1 490.4 701 492.5 699.9M498.8 726.2 517.7 723 534.5 719.9 540.8 726.2 539.7 734.6 534.5 739.8 528.2 745.1 527.1 752.4 503 752.4 499.8 754.5 501.9 759.8 501.9 783.9M506.1 723 507.2 732.5 512.4 734.6M501.9 759.8 521.9 762.9 520.8 768.2 513.5 768.7M512.4 691.5 513.5 698.9 515.6 708.3M496.7 700.5 513.5 699.9M425.3 680 425.5 715.7M472.5 690.5 474.6 689.4 487.2 687.3 487.2 684.2M531.3 710.4 536.6 719.9M542.6 551.2 541.5 578M532.1 594.8 540.5 592.7 541 588.5M643.9 609.5 656 607.4M619.8 544.4 620.3 550.7M595.1 609.5 599.3 613.7M603.5 617.9 606.6 615.8M554.1 602.1 557.3 606.3M619.2 571.7 620.3 575.9M643.4 626.3 646.5 630.5M576.2 546.5 581.4 545.4M545.7 626.3 548.9 634.7M554.1 630.5 561.5 631.5M597.2 632.6 603.5 633.6M620.3 630.5 624.5 626.3M564.6 609.5 572 612.6M572 588.5 573 594.8M546.8 544.4 548.9 549.6M651.8 599 656 599.5M549.9 424.4 551 432.8M588.8 420.2 594 421.2M556.2 463.2 561.5 462.2M584.6 467.4 588.8 468.5M545.7 495.8 560.4 498.9M588.8 489.5 591.9 495.8M610.8 444.3 614 453.8M597.2 509.4 609.8 506.3M622.4 510.5 624.5 516.8M554.1 505.2 557.3 511.5M580.4 506.3 582.5 515.7M599.3 518.9 603.5 517.8M551.5 437 552.6 447.5M574.1 426.5 576.2 429.6M506.3 646.3 507.3 658.9M525.2 646.3 531.5 647.3M544.1 648.4 549.3 652.6M506.3 671.5 512.6 672.5M521 698.8 527.3 703M539.9 703 547.2 701.9M544.1 713.5 552.5 712.4M510.5 739.7 516.8 737.6M544.1 738.7 552.5 740.8M560.9 650.5 567.2 651.5M573.5 646.3 574.5 655.7M605 646.3 607.1 653.6M560.9 715.6 567.2 716.6M558.8 758.6 563 763.9M567.2 771.2 573.5 770.2M590.3 682 594.5 686.2M615.5 661 620.7 658.9M389.6 648.8 398 647.7M408.5 632 414.8 634.1M453.6 629.9 461 634.1M402.2 684.5 408.5 683.4M440 695 441 701.3M461 684.5 462 692.9M473.6 706.5 474.6 713.9M498.8 680.3 505.1 682.4M524 695 529.2 703.4M374.9 663.5 387.5 662.4M408.5 663.5 421.1 665.6M440 665.6 448.4 663.5M402.2 705.5 410.6 707.6M492.5 710.7 498.8 709.7M442.1 753.5 443.1 764M450.5 753.5 451.5 761.9M490.4 753.5 491.4 764M508.2 755.6 515.6 756.6M513.5 772.4 519.8 774.5M492.5 711.5 498.8 713.6M471.5 706.2 472.5 713.6M518.7 695.7 524 696.8M534.5 743 540.8 747.2M490.4 500.8 498.8 498.7M513.5 494.5 515.6 502.9M508.2 526 515.6 524.9M519.8 531.2 524 539.6M398 505 408.5 503.9M366.5 520.7 369.6 529.1M408.5 524.9 416.9 523.9M440 530.2 450.5 528.1M450.5 518.6 458.9 517.6M348.6 473.5 349.2 479.8M400.1 472.4 402.2 479.8M429.5 486.1 435.8 485.6M490.4 484 498.8 482.9M513.5 465.1 519.8 463M508.2 436.2 509.3 444.1M400.1 538.9 406.4 537.8M450.5 530.5 458.9 528.4M455.7 566.2 461 565.1M414.8 587.2 419 593.5M437.9 578.8 440 587.2M471.5 551.5 474.6 559.9M488.3 559.9 492.5 568.3M509.3 538.9 513.5 545.2M522.9 532.6 524 541"/>
<path class="s2" d="M360.2 677.1 370.7 690.8 380.1 695 398 713.9 406.4 721.2 416.9 728.6 426.3 735M375.9 710.7 393.8 716 408.5 720.2 424.2 717 440 716 454.7 716 466.2 717M595 713.5 591.3 719.8 588.2 727.1 584 745 581.9 760.7M408.5 720.9 422.1 716.7 440 715.7 454.7 715.7 466.2 716.7M398 713.6 406.4 720.9 417.9 728.3 427.4 734.6 434.7 744 437.4 753.5 435.8 768.2 443.1 768.7 445.2 751.4 447.3 746.1"/>
<path class="s25" d="M479.4 478.2 481.2 494.5 481.8 509.2M539.2 431.5 539.7 545M611.4 421.2 616.6 440.1 622.9 458 629.2 479 633.9 500 639.7 521 645 540"/>
<path class="wl" d="M411.1 413.1 438.4 409.7 441.9 446.2 414.3 448.8 411.1 413.1M412.2 427.1 440 423.7M422.7 411 423.7 425.7M468.3 443.6 495.6 439.4 498.8 468.2 470.4 473 468.3 443.6M370.7 545 364.4 539.6 359.7 532.3 353.9 523.9 349.7 511.3 345.5 494.5 342.3 479.8 340.8 467.2 341.1 464 351.8 455.6 373.8 447.8 385.4 445.4 413.2 442.5M442.1 442.5 453.6 441.5 465.2 438.8 482 436.2 498.8 433.1 521.9 429.9"/>
<path class="g" d="M633.5 662.9 643.6 649.1 653.7 637.3 659.9 633.4 661 633.4 661 660.6ZM662.7 633.4 671.7 633.4 671.7 643.5 662.7 644.1ZM662.7 645.7 671.7 645.2 672.2 659.2 662.7 660.3ZM675.6 634.5 695.2 634 695.8 648.5 675.6 649.1ZM675.6 650.8 695.8 649.9 695.8 655.8 676.1 658.6ZM700.2 633.4 718.2 632.8 718.2 655.3 699.7 656.9ZM720.4 632.8 738.9 632.6 738.9 638.5 728.8 638.7 728.3 648 725.5 648.5 724.3 654.1 720.4 654.7ZM629.6 670.4 658.8 666.5 659.3 689.5 621.8 689.8ZM661 667 670.5 665.9 671.1 689.5 661 689.8ZM673.9 665.9 693.5 664.2 693.5 689.8 673.3 689.8ZM697.4 664.2 715.9 662.6 715.9 689.5 696.9 689.8ZM627.4 693.4 641.9 692.8 641.9 705.1 636.3 700.7 631.3 697.9 627.4 696.7ZM643.6 692.8 670 692.3 670.5 724.2 656.5 724.8 656 728.7 648.7 728.7 648.1 726.4 643.1 728.1ZM672.8 692.8 693.5 692.6 693.8 709.6 672.8 710ZM672.8 711.9 693 711.6 693.2 723.6 672.8 724.2ZM696.9 692.6 715.4 692.3 715.6 709.6 696.9 710ZM695.8 711.9 715.4 711.6 715.4 723.4 695.8 723.6ZM719.3 692.3 735.5 692 736.1 722.5 719.3 722.7ZM738.9 692 760.8 691.4 761.3 723.6 738.9 724.2ZM764.1 691.7 775.9 691.1 775.9 703.5 764.1 703.7ZM763.6 706.3 779.8 705.7 780.4 723.6 763.6 724.2ZM633.5 719.7 640.8 718 640.8 732.6 638 738.2 630.2 736 622.9 734.3 623.5 731.5 633.5 730.9ZM642.5 730.9 670 731.5 671.1 746.6 657.1 749.4 641.4 752.8 641.9 741.6ZM622.9 742.7 636.9 743.3 636.9 757.3 622.3 757.8ZM673.3 732.6 693 731.5 693.5 742.7 672.8 746.1ZM685.1 724.8 693 724.5 693.2 729.8 685.1 730.1ZM695.8 724.8 714.2 724.5 714.2 729.8 695.8 730.1ZM695.8 732.1 713.7 730.9 715.4 739.3 695.8 742.1ZM718.2 734.9 728.8 733.2 729.4 728.1 731.6 727.6 731.6 724.8 735.5 724.8 736.1 736 717.6 739.3ZM738.3 725.3 750.7 724.8 750.7 730.4 749 736 738.9 737.7ZM753.5 725.3 760.8 725.1 760.8 734.3 751.8 735.4ZM763.6 725.9 780.4 724.8 780.9 728.7 764.1 731.5ZM673.3 748.3 693.5 744.4 694.1 756.2 673.9 757.8ZM696.3 743.8 714.8 741 715.4 755 696.3 756.2ZM717.6 741 726.6 739.3 728.8 751.7 718.2 753.9ZM728.8 738.8 737.8 737.1 738.9 750.5 731.1 751.7ZM738.9 737.7 749 736 750.1 742.7 760.8 741 761.3 747.7 740 750.5ZM764.1 732.6 780.9 730.4 781.5 740.5 764.7 741.6ZM764.7 743.3 781.5 742.1 782.1 748.3 765.3 749.4ZM640.3 757.8 647.6 757.3 647.6 765.1 639.7 765.7ZM650.4 755.6 671.1 750.5 671.7 773 668.3 773.5 667.7 770.7 655.4 768.5 654.8 766.8 650.1 767.4ZM674.5 759.5 693 758.4 693.5 769.6 684 770.7 684 772.4 675 774.1ZM696.3 758.4 716.5 756.7 715.9 759.5 710.9 760.1 710.3 768.5 701.9 769.6 701.9 771.8 695.8 772.4ZM724.3 758.4 728.3 757.8 728.8 766.2 724.9 767.4ZM731.1 755 737.2 753.9 737.8 773 731.1 773.5ZM738.9 752.8 760.8 749.4 761.3 757.3 748.4 759 747.9 761.8 742.3 762.3 741.2 756.7 739.5 757.3ZM739.5 764.6 760.8 762.3 760.8 768.5 740 771.8ZM764.1 751.1 774.8 750 774.8 757.8 764.1 759ZM765.8 761.2 768.6 760.9 768.6 766.2 765.8 766.5Z"/>
<path class="b15" d="M645.9 662 649.2 651.9 659.3 639.6M681.7 646.9 681.7 641.8 688.5 641.3M684 643.5 688.5 642.9M643.6 669.8 643.1 682.2 636.9 682.7 636.3 689.5M626.8 683.3 629.1 689.5M650.4 669.3 650.9 677.7 643.6 678.2M653.7 678.8 654.3 689.5M666 673.2 671.1 673.2M682.9 664.8 683.4 673.2 677.3 673.8M688.5 668.7 689 672.1M682.9 683.3 686.2 683.8 686.8 689.8M683.4 673.2 693 672.6M697.4 676 708.6 674.3 709.8 677.7M707.5 681 710.9 680.5 710.3 686.1M649.8 692.8 650.9 713.6 652.6 716.9M699.7 704.6 700.8 702.9 715.4 702.1M721 704 727.1 703.5 727.1 699M721 713.6 724.3 713.6 724.3 711.3M722.1 707.4 735.5 706.8M728.8 713.6 735.5 714.7M742.3 692.3 742.8 702.3 738.9 702.6M745.6 697.9 746.2 702.3M754.6 692.3 755.7 702.3M738.9 703.5 760.8 702.9M748.4 705.1 745.6 722.5M755.7 705.1 752.9 722.5M740 713.6 740.6 716.4M768.6 706.8 768.6 718 764.1 718.6M648.1 736 654.8 735.4 657.1 741.6 647 742.7M659.3 732.6 660.4 747.2M630.7 746.1 636.9 746.1M630.7 751.7 636.9 751.7M680.6 732.6 681.2 735.4M676.1 747.7 676.7 751.7M684 746.6 685.1 751.7 687.3 752.2M699.7 749.4 705.3 748.3 704.7 743.8M709.8 747.7 713.7 747.2M747.9 736 749 742.1M722.1 740.5 723.2 752.8M733.3 738.2 734.4 751.1M658.2 755 659.3 764.6 663.8 765.1M685.1 759.5 685.7 762.9M677.3 765.7 688.5 764.6M698.6 765.1 706.4 764M706.4 759.5 708.6 765.1M743.4 764.6 744 767.9M754.6 763.1 754.6 765.1M743.4 725.9 742.3 737.1"/>
<path d="M720.4 660.9 761.3 656.9 760.8 687.2 720.4 687.5Z" fill="#fff" stroke="#adadad" stroke-width="1"/>
<path d="M747.3 658.4 761.1 657.2 760.8 667.6 747.3 667.6Z" fill="#adadad"/>
<path d="M750.9 659 760 658.2 760 665.9 750.9 665.9Z" fill="#fff"/>
<path d="M599.5 721.4 594.5 732.4 591.6 742.9 590.3 755.5 590.7 766 592 775.4" fill="none" stroke="#f2f3f5" stroke-width="3"/>
<path d="M442.1 443.4 453.6 442.3 465.2 439.8 482 437.2 498.8 434 521.9 430.9 540.8 427.6" fill="none" stroke="#adadad" stroke-width="3"/>
<path d="M468.3 443.6 495.6 439.4 498.8 468.2 470.4 473Z" fill="none" stroke="#adadad" stroke-width="1.8" stroke-linejoin="round"/>
<path d="M481.5 479.8 492.5 478.2 493.8 486.1 489.3 486.6 488.8 495 482.5 495.5Z" fill="none" stroke="#adadad" stroke-width="1.5"/>
<path class="sr" d="M387 452.5 390 483.8 385 485 386.2 507.5M440 467.5 425.5 480 428 502.5 435 527.5M360 527 386.2 510 428 503 450 500M597.5 407.5 600 440 611.2 477.5 619.5 490 619.5 511.2 590 517.5 572.5 518 570.5 513.8M542.5 433.8 562.5 432.5 605 418.8M540.5 538.8 555 527.5 570.5 513.8M504.5 510 506.2 537.5 502.5 560 501.2 575M403.2 605.5 405 625 410.5 654.5 416.2 656.2 412.5 670 410.5 691.2 401.2 692.5 405 707.5 413.8 715M673.9 630.4 671.7 689.6 673.6 777.8M719.1 628.9 717.2 689.6 715.8 756.1 717.9 758.3 717.9 764.8M763.1 685.3 761.6 724.3 763.1 769.1M616 691.1 777.9 688.2M671 724.3 717.2 722.9 781.6 724.3M636.3 759.8 639.2 756.1 671 748.2 786.6 727.9M673.1 758.3 715.8 756.1 785.9 749.6"/>
<path class="pr" d="M0 802 118.8 794.4M1060.8 42 904 204.8 858 258 824 450 806 469.2 792.8 484 759.2 512 755.2 530 768.8 592.8 780 649.2M806 469.2 720 434 700 418 685 407.5 673.8 402 667.5 400.8 611.2 401.8 557.5 405.8 551.2 413.8 542.5 419.5M759.2 512 700 508 680 507.5 634.5 505.5 612.5 502.5 595 500.5 570 499.5 540.5 500M1441.2 542.4 1432 542.8 1342.8 553.2 1224 592.8 1137.2 622 948 636 780 649.2 718.8 655.8 672.5 661.2 632.5 666.2 625 667 592.5 664.5 551.2 662 547.5 664.5 540 660 510 656.2 495 654.5 466.2 654.5 410 654.5 385 655.5 355 661.2 330 667.5 300 672.8M299.2 672.8 292.8 708 296 740 302 777.2 352 780.8 378 780.8 384.8 774.8 400 774.8 406 771.2 440 776 468 784 504 791.2 524 794.8 538 794 556 788 593.2 776M0 924 168 910 352 898.8 503.2 898.8M685.6 1004.8 666 981.2 632.8 926.8 618 886 610.8 854 610 822 593.2 776 591.2 760 592.5 745 598.8 727.5 612.5 707.5 617.5 687.5 625 667 641.2 645 655 625 660 610 662.5 592.5 662 590 655 570 645 540 634.5 505.5 630 490 617.5 435 611.2 401.8M542.5 419.5 541.2 465 540.5 500 540 540 538.8 560 535 580 527.5 597.5 520 620 512.5 645 509.5 661.2 505 680 500 710 495 732.5 480 760 473.8 768.8 470 782.5 467.5 793.8M480 594.5 475 620 470.5 640 466.2 655 460 685 455 710 454.2 730 460 736.2 461.2 745 467.5 757.5 473.8 767.5M377 567.5 405 546.2 430 532.5 442.5 527.5 465 522 480 517.5 485 513.8 505 506.2 525 502 540.5 500M540.5 551.2 567.5 546.2 592.5 541.2 610 540 625 537 645 533M455.5 452.5 465 471.2 463.8 495 464.5 522 471.2 532.5 477.5 542.5 478 555 480 561.2 483.8 562.5 486.2 576.2 492.5 582.5 495 586.2M377 605.5 402.5 605 411.2 606.2 442.5 601.2 480 594.5 495 586.2 510 582 530 579.5 535 579.5M470.5 640 490 642 511.2 646.2 537.5 648.2 552.5 648.8 552.5 641.2 580 637.5 617.5 633.8 661.2 630.5M552.5 648.8 551.2 662 556.2 663.8 558 685 555 687.5 558.8 710 558.8 723.8 552.5 725.5 556.2 755 558 785"/>
<path class="prt" d="M486.8 42 500 140 520 300 533.2 392 542 419.2M118.8 794.4 164 766.8 180.8 694 300 672.8M468 794 551.2 1020.8M780 649.2 948 636"/>
</g>
<path d="M34 124.2H104" stroke="#000" stroke-width="2.6" fill="none"/>
<path d="M34 159.6H104" stroke="#666" stroke-width="1.7" fill="none"/>
<text x="123.6" y="128.9" class="lg">Primary roads</text>
<text x="123.6" y="165.1" class="lg">Secondary roads</text>
<path d="M47.2 1045.5V1054.3H116.4V1045.5H185.2V1054.3H323.2V1045.5" fill="none" stroke="#222" stroke-width=".9"/>
<text x="47.6" y="1073.8" class="sc" text-anchor="middle">0</text>
<text x="116.2" y="1073.8" class="sc" text-anchor="middle">0.25</text>
<text x="185.2" y="1073.8" class="sc" text-anchor="middle">0.5</text>
<text x="322.4" y="1073.8" class="sc" text-anchor="middle">1km</text>
<g clip-path="url(#c1)">
<path class="pl" d="M1554 79.5h13M1560.5 73v13M1574.9 79.5h13M1581.4 73v13M1595.9 79.5h13M1602.4 73v13M1616.8 79.5h13M1623.3 73v13M1637.7 79.5h13M1644.2 73v13M1658.7 79.5h13M1665.2 73v13M1679.6 79.5h13M1686.1 73v13M1700.5 79.5h13M1707 73v13M1721.4 79.5h13M1727.9 73v13M1742.4 79.5h13M1748.9 73v13M1763.3 79.5h13M1769.8 73v13M1784.2 79.5h13M1790.7 73v13M1805.2 79.5h13M1811.7 73v13M1826.1 79.5h13M1832.6 73v13M1847 79.5h13M1853.5 73v13M1868 79.5h13M1874.5 73v13M1888.9 79.5h13M1895.4 73v13M1909.8 79.5h13M1916.3 73v13M1930.7 79.5h13M1937.2 73v13M1951.7 79.5h13M1958.2 73v13M1554 100.4h13M1560.5 93.9v13M1574.9 100.4h13M1581.4 93.9v13M1595.9 100.4h13M1602.4 93.9v13M1616.8 100.4h13M1623.3 93.9v13M1637.7 100.4h13M1644.2 93.9v13M1658.7 100.4h13M1665.2 93.9v13M1679.6 100.4h13M1686.1 93.9v13M1700.5 100.4h13M1707 93.9v13M1721.4 100.4h13M1727.9 93.9v13M1742.4 100.4h13M1748.9 93.9v13M1763.3 100.4h13M1769.8 93.9v13M1784.2 100.4h13M1790.7 93.9v13M1805.2 100.4h13M1811.7 93.9v13M1826.1 100.4h13M1832.6 93.9v13M1847 100.4h13M1853.5 93.9v13M1868 100.4h13M1874.5 93.9v13M1888.9 100.4h13M1895.4 93.9v13M1909.8 100.4h13M1916.3 93.9v13M1930.7 100.4h13M1937.2 93.9v13M1951.7 100.4h13M1958.2 93.9v13M1554 121.4h13M1560.5 114.9v13M1574.9 121.4h13M1581.4 114.9v13M1595.9 121.4h13M1602.4 114.9v13M1616.8 121.4h13M1623.3 114.9v13M1637.7 121.4h13M1644.2 114.9v13M1658.7 121.4h13M1665.2 114.9v13M1679.6 121.4h13M1686.1 114.9v13M1700.5 121.4h13M1707 114.9v13M1721.4 121.4h13M1727.9 114.9v13M1742.4 121.4h13M1748.9 114.9v13M1763.3 121.4h13M1769.8 114.9v13M1784.2 121.4h13M1790.7 114.9v13M1805.2 121.4h13M1811.7 114.9v13M1826.1 121.4h13M1832.6 114.9v13M1847 121.4h13M1853.5 114.9v13M1868 121.4h13M1874.5 114.9v13M1888.9 121.4h13M1895.4 114.9v13M1909.8 121.4h13M1916.3 114.9v13M1930.7 121.4h13M1937.2 114.9v13M1951.7 121.4h13M1958.2 114.9v13M1554 142.3h13M1560.5 135.8v13M1574.9 142.3h13M1581.4 135.8v13M1595.9 142.3h13M1602.4 135.8v13M1616.8 142.3h13M1623.3 135.8v13M1763.3 142.3h13M1769.8 135.8v13M1784.2 142.3h13M1790.7 135.8v13M1805.2 142.3h13M1811.7 135.8v13M1826.1 142.3h13M1832.6 135.8v13M1847 142.3h13M1853.5 135.8v13M1868 142.3h13M1874.5 135.8v13M1888.9 142.3h13M1895.4 135.8v13M1909.8 142.3h13M1916.3 135.8v13M1930.7 142.3h13M1937.2 135.8v13M1951.7 142.3h13M1958.2 135.8v13M1554 163.2h13M1560.5 156.7v13M1574.9 163.2h13M1581.4 156.7v13M1595.9 163.2h13M1602.4 156.7v13M1616.8 163.2h13M1623.3 156.7v13M1763.3 163.2h13M1769.8 156.7v13M1784.2 163.2h13M1790.7 156.7v13M1805.2 163.2h13M1811.7 156.7v13M1826.1 163.2h13M1832.6 156.7v13M1847 163.2h13M1853.5 156.7v13M1868 163.2h13M1874.5 156.7v13M1888.9 163.2h13M1895.4 156.7v13M1909.8 163.2h13M1916.3 156.7v13M1930.7 163.2h13M1937.2 156.7v13M1951.7 163.2h13M1958.2 156.7v13M1554 184.2h13M1560.5 177.7v13M1574.9 184.2h13M1581.4 177.7v13M1595.9 184.2h13M1602.4 177.7v13M1616.8 184.2h13M1623.3 177.7v13M1763.3 184.2h13M1769.8 177.7v13M1784.2 184.2h13M1790.7 177.7v13M1805.2 184.2h13M1811.7 177.7v13M1826.1 184.2h13M1832.6 177.7v13M1847 184.2h13M1853.5 177.7v13M1868 184.2h13M1874.5 177.7v13M1888.9 184.2h13M1895.4 177.7v13M1909.8 184.2h13M1916.3 177.7v13M1930.7 184.2h13M1937.2 177.7v13M1951.7 184.2h13M1958.2 177.7v13M1554 205.1h13M1560.5 198.6v13M1574.9 205.1h13M1581.4 198.6v13M1595.9 205.1h13M1602.4 198.6v13M1616.8 205.1h13M1623.3 198.6v13M1763.3 205.1h13M1769.8 198.6v13M1784.2 205.1h13M1790.7 198.6v13M1805.2 205.1h13M1811.7 198.6v13M1826.1 205.1h13M1832.6 198.6v13M1847 205.1h13M1853.5 198.6v13M1868 205.1h13M1874.5 198.6v13M1888.9 205.1h13M1895.4 198.6v13M1909.8 205.1h13M1916.3 198.6v13M1930.7 205.1h13M1937.2 198.6v13M1951.7 205.1h13M1958.2 198.6v13M1554 226h13M1560.5 219.5v13M1574.9 226h13M1581.4 219.5v13M1595.9 226h13M1602.4 219.5v13M1616.8 226h13M1623.3 219.5v13M1763.3 226h13M1769.8 219.5v13M1784.2 226h13M1790.7 219.5v13M1805.2 226h13M1811.7 219.5v13M1826.1 226h13M1832.6 219.5v13M1847 226h13M1853.5 219.5v13M1868 226h13M1874.5 219.5v13M1888.9 226h13M1895.4 219.5v13M1909.8 226h13M1916.3 219.5v13M1930.7 226h13M1937.2 219.5v13M1951.7 226h13M1958.2 219.5v13M1554 246.9h13M1560.5 240.4v13M1574.9 246.9h13M1581.4 240.4v13M1595.9 246.9h13M1602.4 240.4v13M1616.8 246.9h13M1623.3 240.4v13M1763.3 246.9h13M1769.8 240.4v13M1784.2 246.9h13M1790.7 240.4v13M1805.2 246.9h13M1811.7 240.4v13M1826.1 246.9h13M1832.6 240.4v13M1847 246.9h13M1853.5 240.4v13M1868 246.9h13M1874.5 240.4v13M1888.9 246.9h13M1895.4 240.4v13M1909.8 246.9h13M1916.3 240.4v13M1930.7 246.9h13M1937.2 240.4v13M1951.7 246.9h13M1958.2 240.4v13M1554 267.9h13M1560.5 261.4v13M1574.9 267.9h13M1581.4 261.4v13M1595.9 267.9h13M1602.4 261.4v13M1616.8 267.9h13M1623.3 261.4v13M1763.3 267.9h13M1769.8 261.4v13M1784.2 267.9h13M1790.7 261.4v13M1805.2 267.9h13M1811.7 261.4v13M1826.1 267.9h13M1832.6 261.4v13M1847 267.9h13M1853.5 261.4v13M1868 267.9h13M1874.5 261.4v13M1888.9 267.9h13M1895.4 261.4v13M1909.8 267.9h13M1916.3 261.4v13M1930.7 267.9h13M1937.2 261.4v13M1951.7 267.9h13M1958.2 261.4v13M1554 288.8h13M1560.5 282.3v13M1574.9 288.8h13M1581.4 282.3v13M1595.9 288.8h13M1602.4 282.3v13M1616.8 288.8h13M1623.3 282.3v13M1763.3 288.8h13M1769.8 282.3v13M1784.2 288.8h13M1790.7 282.3v13M1805.2 288.8h13M1811.7 282.3v13M1826.1 288.8h13M1832.6 282.3v13M1847 288.8h13M1853.5 282.3v13M1868 288.8h13M1874.5 282.3v13M1888.9 288.8h13M1895.4 282.3v13M1909.8 288.8h13M1916.3 282.3v13M1930.7 288.8h13M1937.2 282.3v13M1951.7 288.8h13M1958.2 282.3v13M1554 309.7h13M1560.5 303.2v13M1574.9 309.7h13M1581.4 303.2v13M1595.9 309.7h13M1602.4 303.2v13M1616.8 309.7h13M1623.3 303.2v13M1763.3 309.7h13M1769.8 303.2v13M1784.2 309.7h13M1790.7 303.2v13M1805.2 309.7h13M1811.7 303.2v13M1826.1 309.7h13M1832.6 303.2v13M1847 309.7h13M1853.5 303.2v13M1868 309.7h13M1874.5 303.2v13M1888.9 309.7h13M1895.4 303.2v13M1909.8 309.7h13M1916.3 303.2v13M1930.7 309.7h13M1937.2 303.2v13M1951.7 309.7h13M1958.2 303.2v13M1554 330.7h13M1560.5 324.2v13M1574.9 330.7h13M1581.4 324.2v13M1595.9 330.7h13M1602.4 324.2v13M1616.8 330.7h13M1623.3 324.2v13M1763.3 330.7h13M1769.8 324.2v13M1784.2 330.7h13M1790.7 324.2v13M1805.2 330.7h13M1811.7 324.2v13M1826.1 330.7h13M1832.6 324.2v13M1847 330.7h13M1853.5 324.2v13M1868 330.7h13M1874.5 324.2v13M1888.9 330.7h13M1895.4 324.2v13M1909.8 330.7h13M1916.3 324.2v13M1930.7 330.7h13M1937.2 324.2v13M1951.7 330.7h13M1958.2 324.2v13M1554 351.6h13M1560.5 345.1v13M1574.9 351.6h13M1581.4 345.1v13M1595.9 351.6h13M1602.4 345.1v13M1616.8 351.6h13M1623.3 345.1v13M1763.3 351.6h13M1769.8 345.1v13M1784.2 351.6h13M1790.7 345.1v13M1805.2 351.6h13M1811.7 345.1v13M1826.1 351.6h13M1832.6 345.1v13M1847 351.6h13M1853.5 345.1v13M1868 351.6h13M1874.5 345.1v13M1888.9 351.6h13M1895.4 345.1v13M1909.8 351.6h13M1916.3 345.1v13M1930.7 351.6h13M1937.2 345.1v13M1951.7 351.6h13M1958.2 345.1v13M1554 372.5h13M1560.5 366v13M1574.9 372.5h13M1581.4 366v13M1595.9 372.5h13M1602.4 366v13M1616.8 372.5h13M1623.3 366v13M1763.3 372.5h13M1769.8 366v13M1784.2 372.5h13M1790.7 366v13M1805.2 372.5h13M1811.7 366v13M1826.1 372.5h13M1832.6 366v13M1847 372.5h13M1853.5 366v13M1868 372.5h13M1874.5 366v13M1888.9 372.5h13M1895.4 366v13M1909.8 372.5h13M1916.3 366v13M1930.7 372.5h13M1937.2 366v13M1951.7 372.5h13M1958.2 366v13M1554 393.4h13M1560.5 386.9v13M1574.9 393.4h13M1581.4 386.9v13M1595.9 393.4h13M1602.4 386.9v13M1616.8 393.4h13M1623.3 386.9v13M1763.3 393.4h13M1769.8 386.9v13M1784.2 393.4h13M1790.7 386.9v13M1805.2 393.4h13M1811.7 386.9v13M1826.1 393.4h13M1832.6 386.9v13M1847 393.4h13M1853.5 386.9v13M1868 393.4h13M1874.5 386.9v13M1888.9 393.4h13M1895.4 386.9v13M1909.8 393.4h13M1916.3 386.9v13M1930.7 393.4h13M1937.2 386.9v13M1951.7 393.4h13M1958.2 386.9v13M1554 414.4h13M1560.5 407.9v13M1574.9 414.4h13M1581.4 407.9v13M1595.9 414.4h13M1602.4 407.9v13M1616.8 414.4h13M1623.3 407.9v13M1763.3 414.4h13M1769.8 407.9v13M1784.2 414.4h13M1790.7 407.9v13M1805.2 414.4h13M1811.7 407.9v13M1826.1 414.4h13M1832.6 407.9v13M1847 414.4h13M1853.5 407.9v13M1868 414.4h13M1874.5 407.9v13M1888.9 414.4h13M1895.4 407.9v13M1909.8 414.4h13M1916.3 407.9v13M1930.7 414.4h13M1937.2 407.9v13M1951.7 414.4h13M1958.2 407.9v13M1554 435.3h13M1560.5 428.8v13M1574.9 435.3h13M1581.4 428.8v13M1595.9 435.3h13M1602.4 428.8v13M1616.8 435.3h13M1623.3 428.8v13M1763.3 435.3h13M1769.8 428.8v13M1784.2 435.3h13M1790.7 428.8v13M1805.2 435.3h13M1811.7 428.8v13M1826.1 435.3h13M1832.6 428.8v13M1847 435.3h13M1853.5 428.8v13M1868 435.3h13M1874.5 428.8v13M1888.9 435.3h13M1895.4 428.8v13M1909.8 435.3h13M1916.3 428.8v13M1930.7 435.3h13M1937.2 428.8v13M1951.7 435.3h13M1958.2 428.8v13M1554 456.2h13M1560.5 449.7v13M1574.9 456.2h13M1581.4 449.7v13M1595.9 456.2h13M1602.4 449.7v13M1616.8 456.2h13M1623.3 449.7v13M1763.3 456.2h13M1769.8 449.7v13M1784.2 456.2h13M1790.7 449.7v13M1805.2 456.2h13M1811.7 449.7v13M1826.1 456.2h13M1832.6 449.7v13M1847 456.2h13M1853.5 449.7v13M1868 456.2h13M1874.5 449.7v13M1888.9 456.2h13M1895.4 449.7v13M1909.8 456.2h13M1916.3 449.7v13M1930.7 456.2h13M1937.2 449.7v13M1951.7 456.2h13M1958.2 449.7v13M1554 477.2h13M1560.5 470.7v13M1574.9 477.2h13M1581.4 470.7v13M1595.9 477.2h13M1602.4 470.7v13M1616.8 477.2h13M1623.3 470.7v13M1637.7 477.2h13M1644.2 470.7v13M1658.7 477.2h13M1665.2 470.7v13M1679.6 477.2h13M1686.1 470.7v13M1700.5 477.2h13M1707 470.7v13M1721.4 477.2h13M1727.9 470.7v13M1742.4 477.2h13M1748.9 470.7v13M1763.3 477.2h13M1769.8 470.7v13M1784.2 477.2h13M1790.7 470.7v13M1805.2 477.2h13M1811.7 470.7v13M1826.1 477.2h13M1832.6 470.7v13M1847 477.2h13M1853.5 470.7v13M1868 477.2h13M1874.5 470.7v13M1888.9 477.2h13M1895.4 470.7v13M1909.8 477.2h13M1916.3 470.7v13M1930.7 477.2h13M1937.2 470.7v13M1951.7 477.2h13M1958.2 470.7v13"/><path class="pl2" d="M1642 142.3h4.4M1644.2 140.1v4.4M1663 142.3h4.4M1665.2 140.1v4.4M1683.9 142.3h4.4M1686.1 140.1v4.4M1704.8 142.3h4.4M1707 140.1v4.4M1725.7 142.3h4.4M1727.9 140.1v4.4M1746.7 142.3h4.4M1748.9 140.1v4.4M1642 163.2h4.4M1644.2 161v4.4M1663 163.2h4.4M1665.2 161v4.4M1683.9 163.2h4.4M1686.1 161v4.4M1704.8 163.2h4.4M1707 161v4.4M1725.7 163.2h4.4M1727.9 161v4.4M1746.7 163.2h4.4M1748.9 161v4.4M1642 184.2h4.4M1644.2 182v4.4M1663 184.2h4.4M1665.2 182v4.4M1683.9 184.2h4.4M1686.1 182v4.4M1704.8 184.2h4.4M1707 182v4.4M1725.7 184.2h4.4M1727.9 182v4.4M1746.7 184.2h4.4M1748.9 182v4.4M1642 205.1h4.4M1644.2 202.9v4.4M1663 205.1h4.4M1665.2 202.9v4.4M1683.9 205.1h4.4M1686.1 202.9v4.4M1704.8 205.1h4.4M1707 202.9v4.4M1725.7 205.1h4.4M1727.9 202.9v4.4M1746.7 205.1h4.4M1748.9 202.9v4.4M1642 226h4.4M1644.2 223.8v4.4M1663 226h4.4M1665.2 223.8v4.4M1683.9 226h4.4M1686.1 223.8v4.4M1704.8 226h4.4M1707 223.8v4.4M1725.7 226h4.4M1727.9 223.8v4.4M1746.7 226h4.4M1748.9 223.8v4.4M1642 246.9h4.4M1644.2 244.7v4.4M1663 246.9h4.4M1665.2 244.7v4.4M1683.9 246.9h4.4M1686.1 244.7v4.4M1704.8 246.9h4.4M1707 244.7v4.4M1725.7 246.9h4.4M1727.9 244.7v4.4M1746.7 246.9h4.4M1748.9 244.7v4.4M1642 267.9h4.4M1644.2 265.7v4.4M1663 267.9h4.4M1665.2 265.7v4.4M1683.9 267.9h4.4M1686.1 265.7v4.4M1704.8 267.9h4.4M1707 265.7v4.4M1725.7 267.9h4.4M1727.9 265.7v4.4M1746.7 267.9h4.4M1748.9 265.7v4.4M1642 288.8h4.4M1644.2 286.6v4.4M1663 288.8h4.4M1665.2 286.6v4.4M1683.9 288.8h4.4M1686.1 286.6v4.4M1704.8 288.8h4.4M1707 286.6v4.4M1725.7 288.8h4.4M1727.9 286.6v4.4M1746.7 288.8h4.4M1748.9 286.6v4.4M1642 309.7h4.4M1644.2 307.5v4.4M1663 309.7h4.4M1665.2 307.5v4.4M1683.9 309.7h4.4M1686.1 307.5v4.4M1704.8 309.7h4.4M1707 307.5v4.4M1725.7 309.7h4.4M1727.9 307.5v4.4M1746.7 309.7h4.4M1748.9 307.5v4.4M1642 330.7h4.4M1644.2 328.5v4.4M1663 330.7h4.4M1665.2 328.5v4.4M1683.9 330.7h4.4M1686.1 328.5v4.4M1704.8 330.7h4.4M1707 328.5v4.4M1725.7 330.7h4.4M1727.9 328.5v4.4M1746.7 330.7h4.4M1748.9 328.5v4.4M1642 351.6h4.4M1644.2 349.4v4.4M1663 351.6h4.4M1665.2 349.4v4.4M1683.9 351.6h4.4M1686.1 349.4v4.4M1704.8 351.6h4.4M1707 349.4v4.4M1725.7 351.6h4.4M1727.9 349.4v4.4M1746.7 351.6h4.4M1748.9 349.4v4.4M1642 372.5h4.4M1644.2 370.3v4.4M1663 372.5h4.4M1665.2 370.3v4.4M1683.9 372.5h4.4M1686.1 370.3v4.4M1704.8 372.5h4.4M1707 370.3v4.4M1725.7 372.5h4.4M1727.9 370.3v4.4M1746.7 372.5h4.4M1748.9 370.3v4.4M1642 393.4h4.4M1644.2 391.2v4.4M1663 393.4h4.4M1665.2 391.2v4.4M1683.9 393.4h4.4M1686.1 391.2v4.4M1704.8 393.4h4.4M1707 391.2v4.4M1725.7 393.4h4.4M1727.9 391.2v4.4M1746.7 393.4h4.4M1748.9 391.2v4.4M1642 414.4h4.4M1644.2 412.2v4.4M1663 414.4h4.4M1665.2 412.2v4.4M1683.9 414.4h4.4M1686.1 412.2v4.4M1704.8 414.4h4.4M1707 412.2v4.4M1725.7 414.4h4.4M1727.9 412.2v4.4M1746.7 414.4h4.4M1748.9 412.2v4.4M1642 435.3h4.4M1644.2 433.1v4.4M1663 435.3h4.4M1665.2 433.1v4.4M1683.9 435.3h4.4M1686.1 433.1v4.4M1704.8 435.3h4.4M1707 433.1v4.4M1725.7 435.3h4.4M1727.9 433.1v4.4M1746.7 435.3h4.4M1748.9 433.1v4.4M1642 456.2h4.4M1644.2 454v4.4M1663 456.2h4.4M1665.2 454v4.4M1683.9 456.2h4.4M1686.1 454v4.4M1704.8 456.2h4.4M1707 454v4.4M1725.7 456.2h4.4M1727.9 454v4.4M1746.7 456.2h4.4M1748.9 454v4.4"/>
<use href="#ins"/>
</g>
<path class="rl" d="M1686.3 267.6H1769.9M1686.3 288.6H1769.9M1686.3 309.5H1790.8M1686.3 330.5H1811.7M1686.3 351.4H1811.7M1686.3 372.4H1811.7M1686.3 267.6V372.4M1707.2 267.6V372.4M1728.1 267.6V372.4M1749 267.6V372.4M1769.9 267.6V372.4M1790.8 309.5V372.4M1811.7 330.5V372.4" stroke-opacity=".82"/>
<g clip-path="url(#c2)">
<path class="pl" d="M1684.9 610.1h13M1691.4 603.6v13M1684.9 715.4h13M1691.4 708.9v13M1684.9 820.7h13M1691.4 814.2v13M1684.9 926h13M1691.4 919.5v13M1790.7 610.1h13M1797.2 603.6v13M1790.7 715.4h13M1797.2 708.9v13M1790.7 820.7h13M1797.2 814.2v13M1790.7 926h13M1797.2 919.5v13M1896.5 610.1h13M1903 603.6v13M1896.5 715.4h13M1903 708.9v13M1896.5 820.7h13M1903 814.2v13M1896.5 926h13M1903 919.5v13"/><path class="pl2" d="M1579.1 610.1h13M1579.1 715.4h13M1579.1 820.7h13M1579.1 926h13"/>
<use href="#ins" transform="translate(97.85 471.76) scale(0.945)"/>
</g>
<rect x="1691.4" y="715.4" width="106" height="105.1" class="rl" stroke-opacity=".85" stroke-width="1"/>
<path d="M1539.5 451.1V503.1H1591" fill="none" stroke="#000" stroke-width="1.6"/><path d="M1539.5 443l7.7 8.8h-15.4z" fill="#000"/><path d="M1598.6 503.1l-8.4 -7.6v15.2z" fill="#000"/><text x="1510" y="466.8" class="ax">N–S</text><text x="1557.2" y="521" class="ax">W–E</text>
<path d="M1539.5 905V957H1591" fill="none" stroke="#000" stroke-width="1.6"/><path d="M1539.5 896.9l7.7 8.8h-15.4z" fill="#000"/><path d="M1598.6 957l-8.4 -7.6v15.2z" fill="#000"/><text x="1510" y="920.7" class="ax">N–S</text><text x="1557.2" y="974.9" class="ax">W–E</text>
<text x="1558.4" y="1016.8" class="h1">Walking distance</text>
<text x="1558.2" y="1042.6" class="lt">metric system</text>
<text x="1558.9" y="1069.1" class="rd">300m</text><text x="1558.9" y="1087" class="rd">6 min</text>
<rect x="1559.4" y="1099" width="24.4" height="24" class="rf"/>
<text x="1592" y="1109.4" class="x">x</text>
<text x="1610.8" y="1109.2" class="rd">300m</text><text x="1610.8" y="1127.2" class="rd">6 min</text>
<text x="1781.6" y="1054.8" class="hf">Hofuf</text>
<text x="1781.4" y="1080.6" class="rg">W–E=36’</text><text x="1781.4" y="1106.2" class="rg">N–S=30’</text>
<text x="1558.4" y="1167.8" class="h1">Domestic animal transportation distance</text>
<text x="1558.2" y="1193.4" class="lt">metric system</text>
<text x="1558.9" y="1219.9" class="rd">1.6km</text><text x="1558.9" y="1237.8" class="rd">6 min</text>
<rect x="1558.3" y="1250.5" width="102.8" height="102.6" class="rf"/>
<text x="1676" y="1260.6" class="x">x</text>
<text x="1695.2" y="1260.4" class="rd">1.6km</text><text x="1695.2" y="1278" class="rd">6 min</text>
<text x="1781.6" y="1205" class="hf">Hofuf</text>
<text x="1781.4" y="1230.6" class="rg">W–E=6’</text><text x="1781.4" y="1256.2" class="rg">N–S=6’</text>
</svg></body></html>
